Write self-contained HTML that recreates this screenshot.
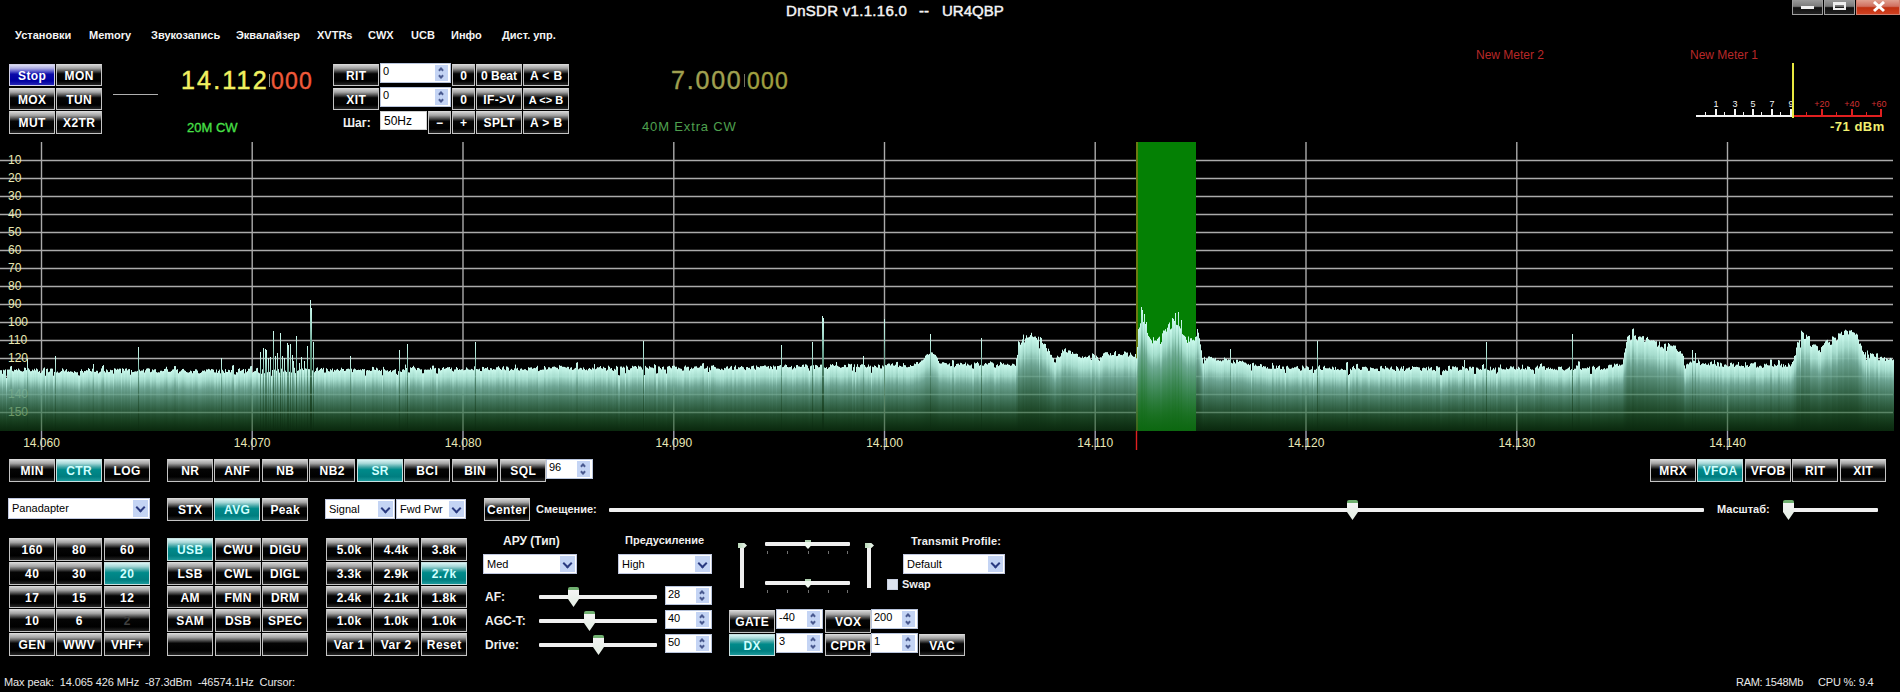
<!DOCTYPE html><html><head><meta charset="utf-8"><style>
*{margin:0;padding:0}
html,body{width:1900px;height:692px;overflow:hidden;background:#000}
body{position:relative;font-family:"Liberation Sans",sans-serif}
.t{position:absolute;white-space:nowrap;line-height:1.2;font-family:"Liberation Sans",sans-serif}
.b{position:absolute;box-sizing:border-box;border:1px solid #c4c4c4;border-top-color:#d8d8d8;
 background:linear-gradient(#d0d0d0 0%,#a4a4a4 16%,#4a4a4a 32%,#050505 44%,#000 80%,#262626 100%);
 color:#fff;font-weight:bold;text-align:center;white-space:nowrap;overflow:hidden;font-family:"Liberation Sans",sans-serif}
.b.tl{background:linear-gradient(#d8f4f4 0%,#a8d8d8 16%,#40a4a4 34%,#008a8a 46%,#007e80 80%,#1c9a9c 100%);color:#d0ffff;border-color:#c8e0e0}
.b.bl{background:linear-gradient(#dcdcf4 0%,#b0b0e4 16%,#5050c8 34%,#0a0aa8 46%,#0000a0 80%,#2424b8 100%);color:#fff;border-color:#d0d0e8}
.sp{position:absolute;box-sizing:border-box;background:#fff;border:1px solid #b8c4dc}
.sp span{position:absolute;left:2px;top:1px;font-size:11px;color:#000;line-height:13px}
.sp i{position:absolute;right:2px;top:1px;width:13px;background:#c4d4f4;box-sizing:border-box}
.sp b{position:absolute;left:4px;width:4px;height:4px;border-left:2px solid #4a5a90;border-top:2px solid #4a5a90;box-sizing:border-box}
.sp b.up{top:3px;transform:rotate(45deg)}
.sp b.dn{bottom:3px;transform:rotate(225deg)}
.inp{position:absolute;box-sizing:border-box;background:#fff;border:1px solid #d0d0d0;font-size:12px;color:#000;padding-left:3px;line-height:19px}
.dd{position:absolute;box-sizing:border-box;background:#fff;border:1px solid #c0c8e0;font-size:11px;color:#000}
.dd span{position:absolute;left:3px;top:0}
.dd i{position:absolute;right:1px;top:1px;bottom:1px;width:15px;background:#c4d4f4}
.dd i:after{content:"";position:absolute;left:4px;top:4px;width:5px;height:5px;border-right:2px solid #2a3a80;border-bottom:2px solid #2a3a80;transform:rotate(45deg)}
.trk{position:absolute;height:4px;background:#f0f0f0;border-radius:1px}
.vtrk{position:absolute;width:4px;background:#f0f0f0}
.thumb{position:absolute;width:11px;height:20px;background:linear-gradient(#70b070 0,#70b070 3px,#f4f4f4 3px,#e8f0e8 70%);clip-path:polygon(0 0,100% 0,100% 60%,50% 100%,0 60%);border-radius:2px 2px 0 0}
.vth{position:absolute;width:9px;height:5px;background:linear-gradient(90deg,#b8d8b8,#f0f8f0);clip-path:polygon(0 0,70% 0,100% 50%,70% 100%,0 100%)}
.sth{position:absolute;width:6px;height:9px;background:linear-gradient(#b0d0b0 0,#b0d0b0 2px,#f0f8f0 2px);clip-path:polygon(0 0,100% 0,100% 65%,50% 100%,0 65%)}
.wb{position:absolute;top:0;height:15px;box-sizing:border-box;border:1px solid #a0a0a0;border-top:none;background:linear-gradient(#9a9a9a 0%,#7a7a7a 45%,#101010 55%,#202020 100%)}
.wb.wc{background:linear-gradient(#e0a090 0%,#d07060 45%,#c03010 55%,#d04020 100%);border-color:#d08070}
.wmin{position:absolute;left:8px;top:6px;width:13px;height:3px;background:#f0f0f0}
.wmax{position:absolute;left:8px;top:2px;width:13px;height:8px;box-sizing:border-box;border:2px solid #f0f0f0;border-top-width:3px}
.wx{position:absolute;left:15px;top:-3px;font:bold 15px "Liberation Sans";color:#fff;font-style:normal}
</style></head><body><svg width="1900" height="692" style="position:absolute;left:0;top:0"><defs><linearGradient id="sg" x1="0" y1="0" x2="0" y2="1"><stop offset="0" stop-color="#ccfaee" stop-opacity="1"/><stop offset="0.16" stop-color="#a8e0d1" stop-opacity="0.98"/><stop offset="0.30" stop-color="#74ae9c" stop-opacity="0.95"/><stop offset="0.56" stop-color="#4b8a69" stop-opacity="0.8"/><stop offset="0.83" stop-color="#276734" stop-opacity="0.62"/><stop offset="1" stop-color="#14501c" stop-opacity="0.5"/></linearGradient></defs><path d="M0,160.5H1893M0,178.5H1893M0,196.5H1893M0,214.5H1893M0,232.5H1893M0,250.5H1893M0,268.5H1893M0,286.5H1893M0,304.5H1893M0,322.5H1893M0,340.5H1893M0,358.5H1893M0,376.5H1893M0,394.5H1893M0,412.5H1893M41.5,142V431M252.2,142V431M463.0,142V431M673.8,142V431M884.5,142V431M1095.2,142V431M1306.0,142V431M1516.8,142V431M1727.5,142V431" stroke="#c8c8c8" stroke-opacity="0.85" stroke-width="1.4" fill="none"/><text x="8" y="398.0" font-family="Liberation Sans" font-size="12" fill="#e8e8b0">140</text><text x="8" y="416.0" font-family="Liberation Sans" font-size="12" fill="#e8e8b0">150</text><rect x="1136" y="142" width="60" height="289" fill="#048004"/><rect x="1136" y="142" width="2" height="289" fill="#6a7a10"/><g fill="url(#sg)"><rect x="0" y="370.2" width="1" height="60.8"/><rect x="1" y="370.2" width="1" height="60.8"/><rect x="2" y="373.8" width="1" height="57.2"/><rect x="3" y="369.8" width="1" height="61.2"/><rect x="4" y="370.3" width="1" height="60.7"/><rect x="5" y="369.4" width="1" height="61.6"/><rect x="6" y="377.9" width="1" height="53.1"/><rect x="7" y="369.6" width="1" height="61.4"/><rect x="8" y="369.6" width="1" height="61.4"/><rect x="9" y="369.5" width="1" height="61.5"/><rect x="10" y="366.5" width="1" height="64.5"/><rect x="11" y="366.0" width="1" height="65.0"/><rect x="12" y="370.8" width="1" height="60.2"/><rect x="13" y="371.4" width="1" height="59.6"/><rect x="14" y="369.7" width="1" height="61.3"/><rect x="15" y="370.0" width="1" height="61.0"/><rect x="16" y="369.2" width="1" height="61.8"/><rect x="17" y="370.3" width="1" height="60.7"/><rect x="18" y="368.5" width="1" height="62.5"/><rect x="19" y="369.7" width="1" height="61.3"/><rect x="20" y="370.8" width="1" height="60.2"/><rect x="21" y="371.2" width="1" height="59.8"/><rect x="22" y="371.6" width="1" height="59.4"/><rect x="23" y="371.1" width="1" height="59.9"/><rect x="24" y="367.6" width="1" height="63.4"/><rect x="25" y="367.9" width="1" height="63.1"/><rect x="26" y="370.1" width="1" height="60.9"/><rect x="27" y="359.0" width="1" height="72.0"/><rect x="28" y="368.3" width="1" height="62.7"/><rect x="29" y="369.6" width="1" height="61.4"/><rect x="30" y="371.2" width="1" height="59.8"/><rect x="31" y="371.1" width="1" height="59.9"/><rect x="32" y="369.6" width="1" height="61.4"/><rect x="33" y="370.5" width="1" height="60.5"/><rect x="34" y="368.8" width="1" height="62.2"/><rect x="35" y="370.3" width="1" height="60.7"/><rect x="36" y="368.4" width="1" height="62.6"/><rect x="37" y="369.3" width="1" height="61.7"/><rect x="38" y="371.8" width="1" height="59.2"/><rect x="39" y="370.9" width="1" height="60.1"/><rect x="40" y="373.1" width="1" height="57.9"/><rect x="41" y="372.3" width="1" height="58.7"/><rect x="42" y="370.5" width="1" height="60.5"/><rect x="43" y="368.4" width="1" height="62.6"/><rect x="44" y="367.5" width="1" height="63.5"/><rect x="45" y="375.9" width="1" height="55.1"/><rect x="46" y="369.0" width="1" height="62.0"/><rect x="47" y="368.6" width="1" height="62.4"/><rect x="48" y="372.2" width="1" height="58.8"/><rect x="49" y="371.6" width="1" height="59.4"/><rect x="50" y="368.7" width="1" height="62.3"/><rect x="51" y="368.5" width="1" height="62.5"/><rect x="52" y="368.7" width="1" height="62.3"/><rect x="53" y="375.8" width="1" height="55.2"/><rect x="54" y="371.9" width="1" height="59.1"/><rect x="55" y="356.0" width="1" height="75.0"/><rect x="56" y="372.4" width="1" height="58.6"/><rect x="57" y="371.5" width="1" height="59.5"/><rect x="58" y="372.7" width="1" height="58.3"/><rect x="59" y="372.6" width="1" height="58.4"/><rect x="60" y="371.8" width="1" height="59.2"/><rect x="61" y="371.0" width="1" height="60.0"/><rect x="62" y="368.3" width="1" height="62.7"/><rect x="63" y="369.5" width="1" height="61.5"/><rect x="64" y="371.3" width="1" height="59.7"/><rect x="65" y="370.3" width="1" height="60.7"/><rect x="66" y="369.1" width="1" height="61.9"/><rect x="67" y="371.8" width="1" height="59.2"/><rect x="68" y="371.2" width="1" height="59.8"/><rect x="69" y="371.9" width="1" height="59.1"/><rect x="70" y="371.3" width="1" height="59.7"/><rect x="71" y="371.6" width="1" height="59.4"/><rect x="72" y="371.9" width="1" height="59.1"/><rect x="73" y="372.8" width="1" height="58.2"/><rect x="74" y="371.1" width="1" height="59.9"/><rect x="75" y="371.9" width="1" height="59.1"/><rect x="76" y="372.4" width="1" height="58.6"/><rect x="77" y="372.2" width="1" height="58.8"/><rect x="78" y="375.3" width="1" height="55.7"/><rect x="79" y="375.7" width="1" height="55.3"/><rect x="80" y="371.0" width="1" height="60.0"/><rect x="81" y="369.3" width="1" height="61.7"/><rect x="82" y="371.0" width="1" height="60.0"/><rect x="83" y="372.5" width="1" height="58.5"/><rect x="84" y="371.0" width="1" height="60.0"/><rect x="85" y="371.1" width="1" height="59.9"/><rect x="86" y="370.1" width="1" height="60.9"/><rect x="87" y="370.4" width="1" height="60.6"/><rect x="88" y="368.1" width="1" height="62.9"/><rect x="89" y="369.0" width="1" height="62.0"/><rect x="90" y="371.0" width="1" height="60.0"/><rect x="91" y="371.5" width="1" height="59.5"/><rect x="92" y="368.7" width="1" height="62.3"/><rect x="93" y="364.0" width="1" height="67.0"/><rect x="94" y="371.8" width="1" height="59.2"/><rect x="95" y="371.9" width="1" height="59.1"/><rect x="96" y="370.7" width="1" height="60.3"/><rect x="97" y="370.8" width="1" height="60.2"/><rect x="98" y="373.3" width="1" height="57.7"/><rect x="99" y="372.3" width="1" height="58.7"/><rect x="100" y="371.6" width="1" height="59.4"/><rect x="101" y="368.4" width="1" height="62.6"/><rect x="102" y="366.1" width="1" height="64.9"/><rect x="103" y="365.1" width="1" height="65.9"/><rect x="104" y="371.1" width="1" height="59.9"/><rect x="105" y="372.4" width="1" height="58.6"/><rect x="106" y="369.4" width="1" height="61.6"/><rect x="107" y="370.3" width="1" height="60.7"/><rect x="108" y="372.1" width="1" height="58.9"/><rect x="109" y="371.9" width="1" height="59.1"/><rect x="110" y="369.8" width="1" height="61.2"/><rect x="111" y="370.2" width="1" height="60.8"/><rect x="112" y="370.1" width="1" height="60.9"/><rect x="113" y="373.6" width="1" height="57.4"/><rect x="114" y="368.3" width="1" height="62.7"/><rect x="115" y="368.7" width="1" height="62.3"/><rect x="116" y="369.8" width="1" height="61.2"/><rect x="117" y="368.8" width="1" height="62.2"/><rect x="118" y="369.4" width="1" height="61.6"/><rect x="119" y="368.6" width="1" height="62.4"/><rect x="120" y="368.7" width="1" height="62.3"/><rect x="121" y="373.1" width="1" height="57.9"/><rect x="122" y="368.3" width="1" height="62.7"/><rect x="123" y="368.9" width="1" height="62.1"/><rect x="124" y="370.7" width="1" height="60.3"/><rect x="125" y="368.7" width="1" height="62.3"/><rect x="126" y="368.4" width="1" height="62.6"/><rect x="127" y="370.4" width="1" height="60.6"/><rect x="128" y="369.3" width="1" height="61.7"/><rect x="129" y="369.1" width="1" height="61.9"/><rect x="130" y="374.7" width="1" height="56.3"/><rect x="131" y="370.0" width="1" height="61.0"/><rect x="132" y="372.1" width="1" height="58.9"/><rect x="133" y="372.0" width="1" height="59.0"/><rect x="134" y="371.6" width="1" height="59.4"/><rect x="135" y="371.3" width="1" height="59.7"/><rect x="136" y="371.5" width="1" height="59.5"/><rect x="137" y="370.9" width="1" height="60.1"/><rect x="138" y="347.0" width="1" height="84.0"/><rect x="139" y="369.6" width="1" height="61.4"/><rect x="140" y="371.1" width="1" height="59.9"/><rect x="141" y="370.5" width="1" height="60.5"/><rect x="142" y="370.5" width="1" height="60.5"/><rect x="143" y="369.3" width="1" height="61.7"/><rect x="144" y="372.5" width="1" height="58.5"/><rect x="145" y="370.3" width="1" height="60.7"/><rect x="146" y="368.7" width="1" height="62.3"/><rect x="147" y="368.3" width="1" height="62.7"/><rect x="148" y="368.3" width="1" height="62.7"/><rect x="149" y="368.7" width="1" height="62.3"/><rect x="150" y="372.2" width="1" height="58.8"/><rect x="151" y="371.7" width="1" height="59.3"/><rect x="152" y="369.4" width="1" height="61.6"/><rect x="153" y="370.2" width="1" height="60.8"/><rect x="154" y="369.4" width="1" height="61.6"/><rect x="155" y="369.2" width="1" height="61.8"/><rect x="156" y="372.1" width="1" height="58.9"/><rect x="157" y="372.6" width="1" height="58.4"/><rect x="158" y="372.2" width="1" height="58.8"/><rect x="159" y="372.4" width="1" height="58.6"/><rect x="160" y="370.8" width="1" height="60.2"/><rect x="161" y="370.7" width="1" height="60.3"/><rect x="162" y="371.2" width="1" height="59.8"/><rect x="163" y="371.0" width="1" height="60.0"/><rect x="164" y="369.0" width="1" height="62.0"/><rect x="165" y="368.7" width="1" height="62.3"/><rect x="166" y="366.8" width="1" height="64.2"/><rect x="167" y="369.3" width="1" height="61.7"/><rect x="168" y="371.8" width="1" height="59.2"/><rect x="169" y="371.8" width="1" height="59.2"/><rect x="170" y="371.7" width="1" height="59.3"/><rect x="171" y="370.9" width="1" height="60.1"/><rect x="172" y="369.6" width="1" height="61.4"/><rect x="173" y="369.3" width="1" height="61.7"/><rect x="174" y="366.1" width="1" height="64.9"/><rect x="175" y="366.1" width="1" height="64.9"/><rect x="176" y="369.8" width="1" height="61.2"/><rect x="177" y="369.2" width="1" height="61.8"/><rect x="178" y="373.2" width="1" height="57.8"/><rect x="179" y="371.7" width="1" height="59.3"/><rect x="180" y="371.3" width="1" height="59.7"/><rect x="181" y="370.2" width="1" height="60.8"/><rect x="182" y="369.0" width="1" height="62.0"/><rect x="183" y="368.9" width="1" height="62.1"/><rect x="184" y="370.3" width="1" height="60.7"/><rect x="185" y="370.9" width="1" height="60.1"/><rect x="186" y="372.0" width="1" height="59.0"/><rect x="187" y="372.4" width="1" height="58.6"/><rect x="188" y="372.6" width="1" height="58.4"/><rect x="189" y="372.1" width="1" height="58.9"/><rect x="190" y="370.6" width="1" height="60.4"/><rect x="191" y="371.2" width="1" height="59.8"/><rect x="192" y="373.2" width="1" height="57.8"/><rect x="193" y="371.0" width="1" height="60.0"/><rect x="194" y="371.0" width="1" height="60.0"/><rect x="195" y="369.3" width="1" height="61.7"/><rect x="196" y="369.4" width="1" height="61.6"/><rect x="197" y="370.6" width="1" height="60.4"/><rect x="198" y="373.2" width="1" height="57.8"/><rect x="199" y="373.4" width="1" height="57.6"/><rect x="200" y="373.0" width="1" height="58.0"/><rect x="201" y="372.2" width="1" height="58.8"/><rect x="202" y="370.7" width="1" height="60.3"/><rect x="203" y="370.8" width="1" height="60.2"/><rect x="204" y="370.3" width="1" height="60.7"/><rect x="205" y="371.4" width="1" height="59.6"/><rect x="206" y="369.4" width="1" height="61.6"/><rect x="207" y="369.6" width="1" height="61.4"/><rect x="208" y="368.9" width="1" height="62.1"/><rect x="209" y="369.3" width="1" height="61.7"/><rect x="210" y="370.3" width="1" height="60.7"/><rect x="211" y="369.0" width="1" height="62.0"/><rect x="212" y="369.2" width="1" height="61.8"/><rect x="213" y="369.7" width="1" height="61.3"/><rect x="214" y="372.3" width="1" height="58.7"/><rect x="215" y="372.5" width="1" height="58.5"/><rect x="216" y="369.5" width="1" height="61.5"/><rect x="217" y="372.8" width="1" height="58.2"/><rect x="218" y="370.9" width="1" height="60.1"/><rect x="219" y="369.6" width="1" height="61.4"/><rect x="220" y="373.3" width="1" height="57.7"/><rect x="221" y="358.0" width="1" height="73.0"/><rect x="222" y="369.8" width="1" height="61.2"/><rect x="223" y="371.3" width="1" height="59.7"/><rect x="224" y="372.9" width="1" height="58.1"/><rect x="225" y="369.1" width="1" height="61.9"/><rect x="226" y="371.9" width="1" height="59.1"/><rect x="227" y="372.0" width="1" height="59.0"/><rect x="228" y="369.8" width="1" height="61.2"/><rect x="229" y="370.1" width="1" height="60.9"/><rect x="230" y="372.3" width="1" height="58.7"/><rect x="231" y="370.0" width="1" height="61.0"/><rect x="232" y="365.6" width="1" height="65.4"/><rect x="233" y="365.1" width="1" height="65.9"/><rect x="234" y="374.3" width="1" height="56.7"/><rect x="235" y="374.6" width="1" height="56.4"/><rect x="236" y="372.0" width="1" height="59.0"/><rect x="237" y="372.4" width="1" height="58.6"/><rect x="238" y="369.0" width="1" height="62.0"/><rect x="239" y="368.3" width="1" height="62.7"/><rect x="240" y="371.0" width="1" height="60.0"/><rect x="241" y="370.4" width="1" height="60.6"/><rect x="242" y="369.8" width="1" height="61.2"/><rect x="243" y="369.0" width="1" height="62.0"/><rect x="244" y="373.3" width="1" height="57.7"/><rect x="245" y="369.2" width="1" height="61.8"/><rect x="246" y="372.2" width="1" height="58.8"/><rect x="247" y="371.1" width="1" height="59.9"/><rect x="248" y="368.8" width="1" height="62.2"/><rect x="249" y="368.7" width="1" height="62.3"/><rect x="250" y="366.3" width="1" height="64.7"/><rect x="251" y="366.0" width="1" height="65.0"/><rect x="252" y="372.6" width="1" height="58.4"/><rect x="253" y="371.9" width="1" height="59.1"/><rect x="254" y="371.2" width="1" height="59.8"/><rect x="255" y="370.9" width="1" height="60.1"/><rect x="256" y="368.3" width="1" height="62.7"/><rect x="257" y="367.9" width="1" height="63.1"/><rect x="258" y="372.5" width="1" height="58.5"/><rect x="259" y="373.2" width="1" height="57.8"/><rect x="260" y="352.0" width="1" height="79.0"/><rect x="261" y="373.8" width="1" height="57.2"/><rect x="262" y="369.3" width="1" height="61.7"/><rect x="263" y="348.0" width="1" height="83.0"/><rect x="264" y="373.2" width="1" height="57.8"/><rect x="265" y="349.0" width="1" height="82.0"/><rect x="266" y="350.0" width="1" height="81.0"/><rect x="267" y="372.2" width="1" height="58.8"/><rect x="268" y="358.0" width="1" height="73.0"/><rect x="269" y="371.9" width="1" height="59.1"/><rect x="270" y="357.0" width="1" height="74.0"/><rect x="271" y="376.2" width="1" height="54.8"/><rect x="272" y="370.0" width="1" height="61.0"/><rect x="273" y="331.0" width="1" height="100.0"/><rect x="274" y="369.6" width="1" height="61.4"/><rect x="275" y="356.0" width="1" height="75.0"/><rect x="276" y="370.7" width="1" height="60.3"/><rect x="277" y="353.0" width="1" height="78.0"/><rect x="278" y="369.1" width="1" height="61.9"/><rect x="279" y="372.6" width="1" height="58.4"/><rect x="280" y="333.0" width="1" height="98.0"/><rect x="281" y="368.7" width="1" height="62.3"/><rect x="282" y="356.0" width="1" height="75.0"/><rect x="283" y="371.6" width="1" height="59.4"/><rect x="284" y="358.0" width="1" height="73.0"/><rect x="285" y="370.6" width="1" height="60.4"/><rect x="286" y="372.0" width="1" height="59.0"/><rect x="287" y="343.0" width="1" height="88.0"/><rect x="288" y="345.0" width="1" height="86.0"/><rect x="289" y="371.8" width="1" height="59.2"/><rect x="290" y="344.0" width="1" height="87.0"/><rect x="291" y="372.5" width="1" height="58.5"/><rect x="292" y="355.0" width="1" height="76.0"/><rect x="293" y="361.0" width="1" height="70.0"/><rect x="294" y="367.8" width="1" height="63.2"/><rect x="295" y="373.1" width="1" height="57.9"/><rect x="296" y="336.0" width="1" height="95.0"/><rect x="297" y="370.9" width="1" height="60.1"/><rect x="298" y="370.3" width="1" height="60.7"/><rect x="299" y="363.0" width="1" height="68.0"/><rect x="300" y="369.2" width="1" height="61.8"/><rect x="301" y="357.0" width="1" height="74.0"/><rect x="302" y="368.5" width="1" height="62.5"/><rect x="303" y="370.0" width="1" height="61.0"/><rect x="304" y="361.0" width="1" height="70.0"/><rect x="305" y="368.4" width="1" height="62.6"/><rect x="306" y="368.8" width="1" height="62.2"/><rect x="307" y="346.0" width="1" height="85.0"/><rect x="308" y="369.1" width="1" height="61.9"/><rect x="309" y="369.2" width="1" height="61.8"/><rect x="310" y="300.0" width="1" height="131.0"/><rect x="311" y="308.0" width="1" height="123.0"/><rect x="312" y="370.4" width="1" height="60.6"/><rect x="313" y="342.0" width="1" height="89.0"/><rect x="314" y="372.2" width="1" height="58.8"/><rect x="315" y="371.0" width="1" height="60.0"/><rect x="316" y="368.3" width="1" height="62.7"/><rect x="317" y="367.4" width="1" height="63.6"/><rect x="318" y="370.7" width="1" height="60.3"/><rect x="319" y="369.9" width="1" height="61.1"/><rect x="320" y="368.9" width="1" height="62.1"/><rect x="321" y="368.0" width="1" height="63.0"/><rect x="322" y="369.3" width="1" height="61.7"/><rect x="323" y="367.8" width="1" height="63.2"/><rect x="324" y="372.6" width="1" height="58.4"/><rect x="325" y="372.5" width="1" height="58.5"/><rect x="326" y="368.2" width="1" height="62.8"/><rect x="327" y="369.2" width="1" height="61.8"/><rect x="328" y="371.1" width="1" height="59.9"/><rect x="329" y="371.5" width="1" height="59.5"/><rect x="330" y="369.2" width="1" height="61.8"/><rect x="331" y="370.2" width="1" height="60.8"/><rect x="332" y="368.5" width="1" height="62.5"/><rect x="333" y="371.7" width="1" height="59.3"/><rect x="334" y="369.9" width="1" height="61.1"/><rect x="335" y="370.4" width="1" height="60.6"/><rect x="336" y="369.6" width="1" height="61.4"/><rect x="337" y="368.9" width="1" height="62.1"/><rect x="338" y="370.1" width="1" height="60.9"/><rect x="339" y="370.9" width="1" height="60.1"/><rect x="340" y="369.8" width="1" height="61.2"/><rect x="341" y="367.7" width="1" height="63.3"/><rect x="342" y="369.0" width="1" height="62.0"/><rect x="343" y="369.0" width="1" height="62.0"/><rect x="344" y="371.0" width="1" height="60.0"/><rect x="345" y="370.7" width="1" height="60.3"/><rect x="346" y="369.1" width="1" height="61.9"/><rect x="347" y="368.8" width="1" height="62.2"/><rect x="348" y="368.6" width="1" height="62.4"/><rect x="349" y="369.2" width="1" height="61.8"/><rect x="350" y="356.0" width="1" height="75.0"/><rect x="351" y="368.7" width="1" height="62.3"/><rect x="352" y="372.1" width="1" height="58.9"/><rect x="353" y="369.4" width="1" height="61.6"/><rect x="354" y="368.5" width="1" height="62.5"/><rect x="355" y="369.2" width="1" height="61.8"/><rect x="356" y="370.1" width="1" height="60.9"/><rect x="357" y="370.0" width="1" height="61.0"/><rect x="358" y="369.7" width="1" height="61.3"/><rect x="359" y="370.0" width="1" height="61.0"/><rect x="360" y="369.5" width="1" height="61.5"/><rect x="361" y="370.3" width="1" height="60.7"/><rect x="362" y="369.0" width="1" height="62.0"/><rect x="363" y="369.4" width="1" height="61.6"/><rect x="364" y="369.1" width="1" height="61.9"/><rect x="365" y="375.7" width="1" height="55.3"/><rect x="366" y="370.5" width="1" height="60.5"/><rect x="367" y="370.0" width="1" height="61.0"/><rect x="368" y="370.4" width="1" height="60.6"/><rect x="369" y="370.2" width="1" height="60.8"/><rect x="370" y="371.0" width="1" height="60.0"/><rect x="371" y="370.7" width="1" height="60.3"/><rect x="372" y="366.9" width="1" height="64.1"/><rect x="373" y="367.1" width="1" height="63.9"/><rect x="374" y="369.6" width="1" height="61.4"/><rect x="375" y="370.0" width="1" height="61.0"/><rect x="376" y="367.7" width="1" height="63.3"/><rect x="377" y="368.5" width="1" height="62.5"/><rect x="378" y="370.5" width="1" height="60.5"/><rect x="379" y="370.0" width="1" height="61.0"/><rect x="380" y="371.0" width="1" height="60.0"/><rect x="381" y="369.8" width="1" height="61.2"/><rect x="382" y="375.3" width="1" height="55.7"/><rect x="383" y="366.9" width="1" height="64.1"/><rect x="384" y="369.2" width="1" height="61.8"/><rect x="385" y="370.3" width="1" height="60.7"/><rect x="386" y="370.6" width="1" height="60.4"/><rect x="387" y="370.2" width="1" height="60.8"/><rect x="388" y="371.6" width="1" height="59.4"/><rect x="389" y="371.0" width="1" height="60.0"/><rect x="390" y="370.1" width="1" height="60.9"/><rect x="391" y="372.1" width="1" height="58.9"/><rect x="392" y="370.7" width="1" height="60.3"/><rect x="393" y="370.2" width="1" height="60.8"/><rect x="394" y="369.8" width="1" height="61.2"/><rect x="395" y="369.1" width="1" height="61.9"/><rect x="396" y="373.8" width="1" height="57.2"/><rect x="397" y="374.9" width="1" height="56.1"/><rect x="398" y="371.1" width="1" height="59.9"/><rect x="399" y="350.0" width="1" height="81.0"/><rect x="400" y="371.5" width="1" height="59.5"/><rect x="401" y="372.0" width="1" height="59.0"/><rect x="402" y="369.6" width="1" height="61.4"/><rect x="403" y="369.2" width="1" height="61.8"/><rect x="404" y="370.1" width="1" height="60.9"/><rect x="405" y="364.6" width="1" height="66.4"/><rect x="406" y="368.0" width="1" height="63.0"/><rect x="407" y="344.0" width="1" height="87.0"/><rect x="408" y="372.3" width="1" height="58.7"/><rect x="409" y="372.5" width="1" height="58.5"/><rect x="410" y="367.3" width="1" height="63.7"/><rect x="411" y="368.0" width="1" height="63.0"/><rect x="412" y="367.1" width="1" height="63.9"/><rect x="413" y="365.8" width="1" height="65.2"/><rect x="414" y="367.3" width="1" height="63.7"/><rect x="415" y="368.6" width="1" height="62.4"/><rect x="416" y="370.1" width="1" height="60.9"/><rect x="417" y="368.0" width="1" height="63.0"/><rect x="418" y="367.9" width="1" height="63.1"/><rect x="419" y="368.6" width="1" height="62.4"/><rect x="420" y="369.5" width="1" height="61.5"/><rect x="421" y="369.3" width="1" height="61.7"/><rect x="422" y="373.3" width="1" height="57.7"/><rect x="423" y="373.2" width="1" height="57.8"/><rect x="424" y="369.7" width="1" height="61.3"/><rect x="425" y="369.5" width="1" height="61.5"/><rect x="426" y="369.8" width="1" height="61.2"/><rect x="427" y="369.6" width="1" height="61.4"/><rect x="428" y="369.6" width="1" height="61.4"/><rect x="429" y="369.7" width="1" height="61.3"/><rect x="430" y="367.8" width="1" height="63.2"/><rect x="431" y="369.4" width="1" height="61.6"/><rect x="432" y="365.7" width="1" height="65.3"/><rect x="433" y="365.6" width="1" height="65.4"/><rect x="434" y="368.4" width="1" height="62.6"/><rect x="435" y="367.9" width="1" height="63.1"/><rect x="436" y="373.3" width="1" height="57.7"/><rect x="437" y="373.6" width="1" height="57.4"/><rect x="438" y="368.2" width="1" height="62.8"/><rect x="439" y="368.6" width="1" height="62.4"/><rect x="440" y="370.4" width="1" height="60.6"/><rect x="441" y="369.9" width="1" height="61.1"/><rect x="442" y="367.9" width="1" height="63.1"/><rect x="443" y="367.1" width="1" height="63.9"/><rect x="444" y="368.9" width="1" height="62.1"/><rect x="445" y="368.5" width="1" height="62.5"/><rect x="446" y="368.0" width="1" height="63.0"/><rect x="447" y="367.2" width="1" height="63.8"/><rect x="448" y="367.3" width="1" height="63.7"/><rect x="449" y="367.0" width="1" height="64.0"/><rect x="450" y="369.0" width="1" height="62.0"/><rect x="451" y="367.6" width="1" height="63.4"/><rect x="452" y="370.8" width="1" height="60.2"/><rect x="453" y="371.5" width="1" height="59.5"/><rect x="454" y="369.5" width="1" height="61.5"/><rect x="455" y="369.4" width="1" height="61.6"/><rect x="456" y="367.0" width="1" height="64.0"/><rect x="457" y="368.2" width="1" height="62.8"/><rect x="458" y="370.0" width="1" height="61.0"/><rect x="459" y="369.2" width="1" height="61.8"/><rect x="460" y="369.8" width="1" height="61.2"/><rect x="461" y="369.3" width="1" height="61.7"/><rect x="462" y="369.1" width="1" height="61.9"/><rect x="463" y="370.3" width="1" height="60.7"/><rect x="464" y="370.1" width="1" height="60.9"/><rect x="465" y="369.7" width="1" height="61.3"/><rect x="466" y="367.4" width="1" height="63.6"/><rect x="467" y="368.5" width="1" height="62.5"/><rect x="468" y="369.4" width="1" height="61.6"/><rect x="469" y="369.7" width="1" height="61.3"/><rect x="470" y="369.7" width="1" height="61.3"/><rect x="471" y="368.9" width="1" height="62.1"/><rect x="472" y="369.3" width="1" height="61.7"/><rect x="473" y="370.2" width="1" height="60.8"/><rect x="474" y="366.3" width="1" height="64.7"/><rect x="475" y="342.0" width="1" height="89.0"/><rect x="476" y="369.0" width="1" height="62.0"/><rect x="477" y="369.2" width="1" height="61.8"/><rect x="478" y="369.4" width="1" height="61.6"/><rect x="479" y="368.7" width="1" height="62.3"/><rect x="480" y="371.0" width="1" height="60.0"/><rect x="481" y="371.1" width="1" height="59.9"/><rect x="482" y="366.9" width="1" height="64.1"/><rect x="483" y="367.0" width="1" height="64.0"/><rect x="484" y="368.7" width="1" height="62.3"/><rect x="485" y="368.0" width="1" height="63.0"/><rect x="486" y="368.2" width="1" height="62.8"/><rect x="487" y="367.1" width="1" height="63.9"/><rect x="488" y="369.6" width="1" height="61.4"/><rect x="489" y="370.1" width="1" height="60.9"/><rect x="490" y="368.1" width="1" height="62.9"/><rect x="491" y="368.3" width="1" height="62.7"/><rect x="492" y="369.8" width="1" height="61.2"/><rect x="493" y="369.0" width="1" height="62.0"/><rect x="494" y="369.4" width="1" height="61.6"/><rect x="495" y="369.5" width="1" height="61.5"/><rect x="496" y="367.3" width="1" height="63.7"/><rect x="497" y="367.2" width="1" height="63.8"/><rect x="498" y="366.2" width="1" height="64.8"/><rect x="499" y="367.7" width="1" height="63.3"/><rect x="500" y="369.0" width="1" height="62.0"/><rect x="501" y="369.8" width="1" height="61.2"/><rect x="502" y="367.4" width="1" height="63.6"/><rect x="503" y="366.2" width="1" height="64.8"/><rect x="504" y="369.3" width="1" height="61.7"/><rect x="505" y="370.2" width="1" height="60.8"/><rect x="506" y="366.5" width="1" height="64.5"/><rect x="507" y="366.7" width="1" height="64.3"/><rect x="508" y="367.6" width="1" height="63.4"/><rect x="509" y="370.8" width="1" height="60.2"/><rect x="510" y="369.8" width="1" height="61.2"/><rect x="511" y="368.9" width="1" height="62.1"/><rect x="512" y="369.8" width="1" height="61.2"/><rect x="513" y="370.1" width="1" height="60.9"/><rect x="514" y="368.4" width="1" height="62.6"/><rect x="515" y="364.6" width="1" height="66.4"/><rect x="516" y="368.6" width="1" height="62.4"/><rect x="517" y="367.8" width="1" height="63.2"/><rect x="518" y="370.2" width="1" height="60.8"/><rect x="519" y="370.6" width="1" height="60.4"/><rect x="520" y="368.8" width="1" height="62.2"/><rect x="521" y="368.4" width="1" height="62.6"/><rect x="522" y="369.7" width="1" height="61.3"/><rect x="523" y="369.8" width="1" height="61.2"/><rect x="524" y="369.2" width="1" height="61.8"/><rect x="525" y="369.2" width="1" height="61.8"/><rect x="526" y="370.1" width="1" height="60.9"/><rect x="527" y="370.5" width="1" height="60.5"/><rect x="528" y="367.2" width="1" height="63.8"/><rect x="529" y="367.8" width="1" height="63.2"/><rect x="530" y="367.5" width="1" height="63.5"/><rect x="531" y="367.3" width="1" height="63.7"/><rect x="532" y="368.8" width="1" height="62.2"/><rect x="533" y="368.3" width="1" height="62.7"/><rect x="534" y="367.9" width="1" height="63.1"/><rect x="535" y="368.2" width="1" height="62.8"/><rect x="536" y="367.1" width="1" height="63.9"/><rect x="537" y="365.8" width="1" height="65.2"/><rect x="538" y="371.1" width="1" height="59.9"/><rect x="539" y="370.6" width="1" height="60.4"/><rect x="540" y="369.9" width="1" height="61.1"/><rect x="541" y="369.9" width="1" height="61.1"/><rect x="542" y="369.6" width="1" height="61.4"/><rect x="543" y="369.6" width="1" height="61.4"/><rect x="544" y="366.0" width="1" height="65.0"/><rect x="545" y="367.4" width="1" height="63.6"/><rect x="546" y="369.6" width="1" height="61.4"/><rect x="547" y="369.2" width="1" height="61.8"/><rect x="548" y="367.3" width="1" height="63.7"/><rect x="549" y="367.3" width="1" height="63.7"/><rect x="550" y="368.3" width="1" height="62.7"/><rect x="551" y="368.3" width="1" height="62.7"/><rect x="552" y="366.9" width="1" height="64.1"/><rect x="553" y="366.7" width="1" height="64.3"/><rect x="554" y="366.5" width="1" height="64.5"/><rect x="555" y="367.1" width="1" height="63.9"/><rect x="556" y="367.7" width="1" height="63.3"/><rect x="557" y="367.8" width="1" height="63.2"/><rect x="558" y="369.2" width="1" height="61.8"/><rect x="559" y="365.2" width="1" height="65.8"/><rect x="560" y="365.9" width="1" height="65.1"/><rect x="561" y="365.8" width="1" height="65.2"/><rect x="562" y="366.8" width="1" height="64.2"/><rect x="563" y="366.8" width="1" height="64.2"/><rect x="564" y="366.9" width="1" height="64.1"/><rect x="565" y="367.3" width="1" height="63.7"/><rect x="566" y="367.7" width="1" height="63.3"/><rect x="567" y="366.8" width="1" height="64.2"/><rect x="568" y="366.9" width="1" height="64.1"/><rect x="569" y="369.2" width="1" height="61.8"/><rect x="570" y="367.7" width="1" height="63.3"/><rect x="571" y="367.2" width="1" height="63.8"/><rect x="572" y="369.9" width="1" height="61.1"/><rect x="573" y="369.5" width="1" height="61.5"/><rect x="574" y="368.6" width="1" height="62.4"/><rect x="575" y="367.9" width="1" height="63.1"/><rect x="576" y="362.8" width="1" height="68.2"/><rect x="577" y="362.2" width="1" height="68.8"/><rect x="578" y="369.3" width="1" height="61.7"/><rect x="579" y="368.5" width="1" height="62.5"/><rect x="580" y="367.8" width="1" height="63.2"/><rect x="581" y="368.2" width="1" height="62.8"/><rect x="582" y="369.7" width="1" height="61.3"/><rect x="583" y="367.4" width="1" height="63.6"/><rect x="584" y="368.9" width="1" height="62.1"/><rect x="585" y="370.1" width="1" height="60.9"/><rect x="586" y="369.5" width="1" height="61.5"/><rect x="587" y="370.4" width="1" height="60.6"/><rect x="588" y="368.8" width="1" height="62.2"/><rect x="589" y="368.0" width="1" height="63.0"/><rect x="590" y="368.9" width="1" height="62.1"/><rect x="591" y="369.6" width="1" height="61.4"/><rect x="592" y="367.7" width="1" height="63.3"/><rect x="593" y="368.6" width="1" height="62.4"/><rect x="594" y="364.1" width="1" height="66.9"/><rect x="595" y="369.2" width="1" height="61.8"/><rect x="596" y="368.5" width="1" height="62.5"/><rect x="597" y="367.2" width="1" height="63.8"/><rect x="598" y="367.5" width="1" height="63.5"/><rect x="599" y="367.1" width="1" height="63.9"/><rect x="600" y="366.0" width="1" height="65.0"/><rect x="601" y="368.2" width="1" height="62.8"/><rect x="602" y="368.7" width="1" height="62.3"/><rect x="603" y="366.8" width="1" height="64.2"/><rect x="604" y="367.8" width="1" height="63.2"/><rect x="605" y="368.0" width="1" height="63.0"/><rect x="606" y="370.6" width="1" height="60.4"/><rect x="607" y="369.7" width="1" height="61.3"/><rect x="608" y="365.7" width="1" height="65.3"/><rect x="609" y="366.8" width="1" height="64.2"/><rect x="610" y="368.6" width="1" height="62.4"/><rect x="611" y="368.0" width="1" height="63.0"/><rect x="612" y="370.2" width="1" height="60.8"/><rect x="613" y="370.9" width="1" height="60.1"/><rect x="614" y="368.8" width="1" height="62.2"/><rect x="615" y="369.7" width="1" height="61.3"/><rect x="616" y="365.9" width="1" height="65.1"/><rect x="617" y="366.8" width="1" height="64.2"/><rect x="618" y="375.1" width="1" height="55.9"/><rect x="619" y="375.5" width="1" height="55.5"/><rect x="620" y="366.6" width="1" height="64.4"/><rect x="621" y="366.5" width="1" height="64.5"/><rect x="622" y="367.7" width="1" height="63.3"/><rect x="623" y="366.7" width="1" height="64.3"/><rect x="624" y="367.6" width="1" height="63.4"/><rect x="625" y="373.2" width="1" height="57.8"/><rect x="626" y="365.6" width="1" height="65.4"/><rect x="627" y="366.7" width="1" height="64.3"/><rect x="628" y="369.7" width="1" height="61.3"/><rect x="629" y="370.1" width="1" height="60.9"/><rect x="630" y="368.4" width="1" height="62.6"/><rect x="631" y="368.1" width="1" height="62.9"/><rect x="632" y="365.8" width="1" height="65.2"/><rect x="633" y="366.6" width="1" height="64.4"/><rect x="634" y="366.2" width="1" height="64.8"/><rect x="635" y="366.0" width="1" height="65.0"/><rect x="636" y="366.8" width="1" height="64.2"/><rect x="637" y="368.7" width="1" height="62.3"/><rect x="638" y="365.7" width="1" height="65.3"/><rect x="639" y="366.6" width="1" height="64.4"/><rect x="640" y="366.4" width="1" height="64.6"/><rect x="641" y="367.5" width="1" height="63.5"/><rect x="642" y="369.5" width="1" height="61.5"/><rect x="643" y="341.0" width="1" height="90.0"/><rect x="644" y="375.1" width="1" height="55.9"/><rect x="645" y="365.9" width="1" height="65.1"/><rect x="646" y="367.3" width="1" height="63.7"/><rect x="647" y="367.8" width="1" height="63.2"/><rect x="648" y="368.7" width="1" height="62.3"/><rect x="649" y="366.2" width="1" height="64.8"/><rect x="650" y="367.2" width="1" height="63.8"/><rect x="651" y="367.5" width="1" height="63.5"/><rect x="652" y="367.6" width="1" height="63.4"/><rect x="653" y="368.2" width="1" height="62.8"/><rect x="654" y="364.2" width="1" height="66.8"/><rect x="655" y="365.1" width="1" height="65.9"/><rect x="656" y="373.5" width="1" height="57.5"/><rect x="657" y="373.2" width="1" height="57.8"/><rect x="658" y="366.4" width="1" height="64.6"/><rect x="659" y="366.6" width="1" height="64.4"/><rect x="660" y="368.1" width="1" height="62.9"/><rect x="661" y="369.4" width="1" height="61.6"/><rect x="662" y="367.0" width="1" height="64.0"/><rect x="663" y="366.5" width="1" height="64.5"/><rect x="664" y="369.5" width="1" height="61.5"/><rect x="665" y="369.6" width="1" height="61.4"/><rect x="666" y="373.5" width="1" height="57.5"/><rect x="667" y="366.7" width="1" height="64.3"/><rect x="668" y="366.2" width="1" height="64.8"/><rect x="669" y="365.9" width="1" height="65.1"/><rect x="670" y="367.4" width="1" height="63.6"/><rect x="671" y="368.3" width="1" height="62.7"/><rect x="672" y="365.9" width="1" height="65.1"/><rect x="673" y="365.6" width="1" height="65.4"/><rect x="674" y="365.7" width="1" height="65.3"/><rect x="675" y="366.8" width="1" height="64.2"/><rect x="676" y="366.7" width="1" height="64.3"/><rect x="677" y="369.1" width="1" height="61.9"/><rect x="678" y="367.6" width="1" height="63.4"/><rect x="679" y="368.2" width="1" height="62.8"/><rect x="680" y="368.6" width="1" height="62.4"/><rect x="681" y="368.9" width="1" height="62.1"/><rect x="682" y="370.6" width="1" height="60.4"/><rect x="683" y="370.5" width="1" height="60.5"/><rect x="684" y="366.6" width="1" height="64.4"/><rect x="685" y="365.5" width="1" height="65.5"/><rect x="686" y="367.3" width="1" height="63.7"/><rect x="687" y="366.8" width="1" height="64.2"/><rect x="688" y="366.8" width="1" height="64.2"/><rect x="689" y="370.5" width="1" height="60.5"/><rect x="690" y="369.0" width="1" height="62.0"/><rect x="691" y="367.6" width="1" height="63.4"/><rect x="692" y="368.7" width="1" height="62.3"/><rect x="693" y="368.2" width="1" height="62.8"/><rect x="694" y="366.6" width="1" height="64.4"/><rect x="695" y="366.4" width="1" height="64.6"/><rect x="696" y="366.3" width="1" height="64.7"/><rect x="697" y="367.7" width="1" height="63.3"/><rect x="698" y="367.8" width="1" height="63.2"/><rect x="699" y="367.3" width="1" height="63.7"/><rect x="700" y="365.8" width="1" height="65.2"/><rect x="701" y="365.8" width="1" height="65.2"/><rect x="702" y="363.5" width="1" height="67.5"/><rect x="703" y="363.1" width="1" height="67.9"/><rect x="704" y="368.7" width="1" height="62.3"/><rect x="705" y="368.4" width="1" height="62.6"/><rect x="706" y="367.9" width="1" height="63.1"/><rect x="707" y="366.3" width="1" height="64.7"/><rect x="708" y="372.0" width="1" height="59.0"/><rect x="709" y="367.6" width="1" height="63.4"/><rect x="710" y="370.2" width="1" height="60.8"/><rect x="711" y="365.7" width="1" height="65.3"/><rect x="712" y="365.6" width="1" height="65.4"/><rect x="713" y="365.1" width="1" height="65.9"/><rect x="714" y="366.8" width="1" height="64.2"/><rect x="715" y="367.2" width="1" height="63.8"/><rect x="716" y="368.6" width="1" height="62.4"/><rect x="717" y="368.5" width="1" height="62.5"/><rect x="718" y="368.6" width="1" height="62.4"/><rect x="719" y="368.9" width="1" height="62.1"/><rect x="720" y="369.9" width="1" height="61.1"/><rect x="721" y="368.7" width="1" height="62.3"/><rect x="722" y="369.4" width="1" height="61.6"/><rect x="723" y="370.1" width="1" height="60.9"/><rect x="724" y="367.9" width="1" height="63.1"/><rect x="725" y="368.3" width="1" height="62.7"/><rect x="726" y="366.7" width="1" height="64.3"/><rect x="727" y="366.3" width="1" height="64.7"/><rect x="728" y="368.7" width="1" height="62.3"/><rect x="729" y="368.2" width="1" height="62.8"/><rect x="730" y="366.7" width="1" height="64.3"/><rect x="731" y="365.9" width="1" height="65.1"/><rect x="732" y="369.8" width="1" height="61.2"/><rect x="733" y="369.9" width="1" height="61.1"/><rect x="734" y="366.8" width="1" height="64.2"/><rect x="735" y="365.4" width="1" height="65.6"/><rect x="736" y="369.2" width="1" height="61.8"/><rect x="737" y="369.2" width="1" height="61.8"/><rect x="738" y="367.2" width="1" height="63.8"/><rect x="739" y="367.6" width="1" height="63.4"/><rect x="740" y="367.0" width="1" height="64.0"/><rect x="741" y="366.0" width="1" height="65.0"/><rect x="742" y="366.8" width="1" height="64.2"/><rect x="743" y="367.3" width="1" height="63.7"/><rect x="744" y="369.2" width="1" height="61.8"/><rect x="745" y="370.1" width="1" height="60.9"/><rect x="746" y="367.1" width="1" height="63.9"/><rect x="747" y="367.0" width="1" height="64.0"/><rect x="748" y="367.9" width="1" height="63.1"/><rect x="749" y="367.8" width="1" height="63.2"/><rect x="750" y="369.2" width="1" height="61.8"/><rect x="751" y="366.3" width="1" height="64.7"/><rect x="752" y="366.0" width="1" height="65.0"/><rect x="753" y="365.6" width="1" height="65.4"/><rect x="754" y="368.6" width="1" height="62.4"/><rect x="755" y="369.7" width="1" height="61.3"/><rect x="756" y="365.5" width="1" height="65.5"/><rect x="757" y="366.8" width="1" height="64.2"/><rect x="758" y="367.0" width="1" height="64.0"/><rect x="759" y="367.6" width="1" height="63.4"/><rect x="760" y="366.1" width="1" height="64.9"/><rect x="761" y="366.2" width="1" height="64.8"/><rect x="762" y="366.1" width="1" height="64.9"/><rect x="763" y="366.0" width="1" height="65.0"/><rect x="764" y="365.4" width="1" height="65.6"/><rect x="765" y="365.5" width="1" height="65.5"/><rect x="766" y="366.7" width="1" height="64.3"/><rect x="767" y="366.6" width="1" height="64.4"/><rect x="768" y="366.0" width="1" height="65.0"/><rect x="769" y="368.5" width="1" height="62.5"/><rect x="770" y="366.1" width="1" height="64.9"/><rect x="771" y="366.9" width="1" height="64.1"/><rect x="772" y="369.1" width="1" height="61.9"/><rect x="773" y="365.5" width="1" height="65.5"/><rect x="774" y="366.6" width="1" height="64.4"/><rect x="775" y="366.3" width="1" height="64.7"/><rect x="776" y="369.6" width="1" height="61.4"/><rect x="777" y="366.0" width="1" height="65.0"/><rect x="778" y="366.0" width="1" height="65.0"/><rect x="779" y="365.6" width="1" height="65.4"/><rect x="780" y="365.0" width="1" height="66.0"/><rect x="781" y="345.0" width="1" height="86.0"/><rect x="782" y="367.2" width="1" height="63.8"/><rect x="783" y="366.9" width="1" height="64.1"/><rect x="784" y="365.5" width="1" height="65.5"/><rect x="785" y="364.5" width="1" height="66.5"/><rect x="786" y="365.0" width="1" height="66.0"/><rect x="787" y="367.0" width="1" height="64.0"/><rect x="788" y="367.3" width="1" height="63.7"/><rect x="789" y="367.1" width="1" height="63.9"/><rect x="790" y="367.0" width="1" height="64.0"/><rect x="791" y="365.9" width="1" height="65.1"/><rect x="792" y="369.4" width="1" height="61.6"/><rect x="793" y="368.3" width="1" height="62.7"/><rect x="794" y="366.8" width="1" height="64.2"/><rect x="795" y="368.2" width="1" height="62.8"/><rect x="796" y="365.1" width="1" height="65.9"/><rect x="797" y="365.0" width="1" height="66.0"/><rect x="798" y="366.4" width="1" height="64.6"/><rect x="799" y="366.5" width="1" height="64.5"/><rect x="800" y="367.0" width="1" height="64.0"/><rect x="801" y="366.7" width="1" height="64.3"/><rect x="802" y="364.9" width="1" height="66.1"/><rect x="803" y="364.6" width="1" height="66.4"/><rect x="804" y="366.9" width="1" height="64.1"/><rect x="805" y="364.3" width="1" height="66.7"/><rect x="806" y="364.6" width="1" height="66.4"/><rect x="807" y="365.6" width="1" height="65.4"/><rect x="808" y="368.3" width="1" height="62.7"/><rect x="809" y="370.6" width="1" height="60.4"/><rect x="810" y="366.2" width="1" height="64.8"/><rect x="811" y="365.5" width="1" height="65.5"/><rect x="812" y="342.0" width="1" height="89.0"/><rect x="813" y="365.2" width="1" height="65.8"/><rect x="814" y="369.0" width="1" height="62.0"/><rect x="815" y="364.9" width="1" height="66.1"/><rect x="816" y="365.1" width="1" height="65.9"/><rect x="817" y="365.8" width="1" height="65.2"/><rect x="818" y="367.3" width="1" height="63.7"/><rect x="819" y="367.1" width="1" height="63.9"/><rect x="820" y="364.7" width="1" height="66.3"/><rect x="821" y="364.6" width="1" height="66.4"/><rect x="822" y="316.0" width="1" height="115.0"/><rect x="823" y="318.0" width="1" height="113.0"/><rect x="824" y="367.5" width="1" height="63.5"/><rect x="825" y="368.0" width="1" height="63.0"/><rect x="826" y="367.1" width="1" height="63.9"/><rect x="827" y="369.0" width="1" height="62.0"/><rect x="828" y="367.7" width="1" height="63.3"/><rect x="829" y="367.1" width="1" height="63.9"/><rect x="830" y="364.3" width="1" height="66.7"/><rect x="831" y="365.1" width="1" height="65.9"/><rect x="832" y="364.0" width="1" height="67.0"/><rect x="833" y="365.2" width="1" height="65.8"/><rect x="834" y="366.0" width="1" height="65.0"/><rect x="835" y="365.3" width="1" height="65.7"/><rect x="836" y="362.0" width="1" height="69.0"/><rect x="837" y="365.8" width="1" height="65.2"/><rect x="838" y="366.5" width="1" height="64.5"/><rect x="839" y="366.9" width="1" height="64.1"/><rect x="840" y="367.8" width="1" height="63.2"/><rect x="841" y="367.5" width="1" height="63.5"/><rect x="842" y="367.0" width="1" height="64.0"/><rect x="843" y="366.9" width="1" height="64.1"/><rect x="844" y="364.9" width="1" height="66.1"/><rect x="845" y="365.1" width="1" height="65.9"/><rect x="846" y="367.2" width="1" height="63.8"/><rect x="847" y="367.1" width="1" height="63.9"/><rect x="848" y="363.7" width="1" height="67.3"/><rect x="849" y="364.1" width="1" height="66.9"/><rect x="850" y="364.4" width="1" height="66.6"/><rect x="851" y="363.9" width="1" height="67.1"/><rect x="852" y="370.6" width="1" height="60.4"/><rect x="853" y="367.1" width="1" height="63.9"/><rect x="854" y="364.3" width="1" height="66.7"/><rect x="855" y="372.1" width="1" height="58.9"/><rect x="856" y="366.8" width="1" height="64.2"/><rect x="857" y="364.2" width="1" height="66.8"/><rect x="858" y="366.9" width="1" height="64.1"/><rect x="859" y="367.3" width="1" height="63.7"/><rect x="860" y="365.1" width="1" height="65.9"/><rect x="861" y="364.3" width="1" height="66.7"/><rect x="862" y="364.3" width="1" height="66.7"/><rect x="863" y="356.0" width="1" height="75.0"/><rect x="864" y="365.0" width="1" height="66.0"/><rect x="865" y="366.7" width="1" height="64.3"/><rect x="866" y="367.5" width="1" height="63.5"/><rect x="867" y="366.8" width="1" height="64.2"/><rect x="868" y="364.5" width="1" height="66.5"/><rect x="869" y="366.6" width="1" height="64.4"/><rect x="870" y="365.7" width="1" height="65.3"/><rect x="871" y="372.8" width="1" height="58.2"/><rect x="872" y="366.7" width="1" height="64.3"/><rect x="873" y="367.1" width="1" height="63.9"/><rect x="874" y="365.4" width="1" height="65.6"/><rect x="875" y="366.0" width="1" height="65.0"/><rect x="876" y="367.2" width="1" height="63.8"/><rect x="877" y="367.6" width="1" height="63.4"/><rect x="878" y="364.5" width="1" height="66.5"/><rect x="879" y="365.1" width="1" height="65.9"/><rect x="880" y="368.4" width="1" height="62.6"/><rect x="881" y="368.5" width="1" height="62.5"/><rect x="882" y="365.5" width="1" height="65.5"/><rect x="883" y="366.4" width="1" height="64.6"/><rect x="884" y="319.0" width="1" height="112.0"/><rect x="885" y="365.0" width="1" height="66.0"/><rect x="886" y="365.3" width="1" height="65.7"/><rect x="887" y="364.1" width="1" height="66.9"/><rect x="888" y="363.5" width="1" height="67.5"/><rect x="889" y="363.6" width="1" height="67.4"/><rect x="890" y="365.4" width="1" height="65.6"/><rect x="891" y="364.1" width="1" height="66.9"/><rect x="892" y="363.3" width="1" height="67.7"/><rect x="893" y="365.5" width="1" height="65.5"/><rect x="894" y="365.7" width="1" height="65.3"/><rect x="895" y="364.7" width="1" height="66.3"/><rect x="896" y="362.1" width="1" height="68.9"/><rect x="897" y="361.9" width="1" height="69.1"/><rect x="898" y="367.1" width="1" height="63.9"/><rect x="899" y="365.6" width="1" height="65.4"/><rect x="900" y="366.0" width="1" height="65.0"/><rect x="901" y="366.6" width="1" height="64.4"/><rect x="902" y="366.7" width="1" height="64.3"/><rect x="903" y="363.1" width="1" height="67.9"/><rect x="904" y="365.1" width="1" height="65.9"/><rect x="905" y="365.3" width="1" height="65.7"/><rect x="906" y="367.2" width="1" height="63.8"/><rect x="907" y="367.3" width="1" height="63.7"/><rect x="908" y="366.9" width="1" height="64.1"/><rect x="909" y="366.9" width="1" height="64.1"/><rect x="910" y="365.0" width="1" height="66.0"/><rect x="911" y="366.0" width="1" height="65.0"/><rect x="912" y="366.0" width="1" height="65.0"/><rect x="913" y="365.7" width="1" height="65.3"/><rect x="914" y="363.6" width="1" height="67.4"/><rect x="915" y="364.1" width="1" height="66.9"/><rect x="916" y="362.1" width="1" height="68.9"/><rect x="917" y="362.0" width="1" height="69.0"/><rect x="918" y="363.8" width="1" height="67.2"/><rect x="919" y="362.7" width="1" height="68.3"/><rect x="920" y="361.8" width="1" height="69.2"/><rect x="921" y="360.5" width="1" height="70.5"/><rect x="922" y="360.3" width="1" height="70.7"/><rect x="923" y="359.5" width="1" height="71.5"/><rect x="924" y="358.2" width="1" height="72.8"/><rect x="925" y="355.7" width="1" height="75.3"/><rect x="926" y="354.7" width="1" height="76.3"/><rect x="927" y="354.1" width="1" height="76.9"/><rect x="928" y="354.7" width="1" height="76.3"/><rect x="929" y="353.9" width="1" height="77.1"/><rect x="930" y="334.0" width="1" height="97.0"/><rect x="931" y="352.3" width="1" height="78.7"/><rect x="932" y="352.5" width="1" height="78.5"/><rect x="933" y="354.0" width="1" height="77.0"/><rect x="934" y="354.5" width="1" height="76.5"/><rect x="935" y="354.9" width="1" height="76.1"/><rect x="936" y="356.4" width="1" height="74.6"/><rect x="937" y="357.8" width="1" height="73.2"/><rect x="938" y="361.0" width="1" height="70.0"/><rect x="939" y="363.2" width="1" height="67.8"/><rect x="940" y="363.6" width="1" height="67.4"/><rect x="941" y="363.5" width="1" height="67.5"/><rect x="942" y="362.2" width="1" height="68.8"/><rect x="943" y="362.2" width="1" height="68.8"/><rect x="944" y="362.8" width="1" height="68.2"/><rect x="945" y="363.0" width="1" height="68.0"/><rect x="946" y="363.2" width="1" height="67.8"/><rect x="947" y="364.5" width="1" height="66.5"/><rect x="948" y="364.3" width="1" height="66.7"/><rect x="949" y="363.3" width="1" height="67.7"/><rect x="950" y="366.2" width="1" height="64.8"/><rect x="951" y="366.0" width="1" height="65.0"/><rect x="952" y="360.1" width="1" height="70.9"/><rect x="953" y="360.4" width="1" height="70.6"/><rect x="954" y="367.2" width="1" height="63.8"/><rect x="955" y="365.9" width="1" height="65.1"/><rect x="956" y="364.0" width="1" height="67.0"/><rect x="957" y="363.7" width="1" height="67.3"/><rect x="958" y="363.6" width="1" height="67.4"/><rect x="959" y="364.9" width="1" height="66.1"/><rect x="960" y="362.8" width="1" height="68.2"/><rect x="961" y="363.1" width="1" height="67.9"/><rect x="962" y="364.3" width="1" height="66.7"/><rect x="963" y="364.3" width="1" height="66.7"/><rect x="964" y="364.0" width="1" height="67.0"/><rect x="965" y="362.5" width="1" height="68.5"/><rect x="966" y="365.6" width="1" height="65.4"/><rect x="967" y="363.7" width="1" height="67.3"/><rect x="968" y="364.6" width="1" height="66.4"/><rect x="969" y="365.4" width="1" height="65.6"/><rect x="970" y="365.4" width="1" height="65.6"/><rect x="971" y="364.4" width="1" height="66.6"/><rect x="972" y="368.3" width="1" height="62.7"/><rect x="973" y="368.7" width="1" height="62.3"/><rect x="974" y="362.5" width="1" height="68.5"/><rect x="975" y="363.4" width="1" height="67.6"/><rect x="976" y="363.0" width="1" height="68.0"/><rect x="977" y="361.9" width="1" height="69.1"/><rect x="978" y="363.3" width="1" height="67.7"/><rect x="979" y="365.7" width="1" height="65.3"/><rect x="980" y="364.9" width="1" height="66.1"/><rect x="981" y="338.0" width="1" height="93.0"/><rect x="982" y="365.6" width="1" height="65.4"/><rect x="983" y="365.7" width="1" height="65.3"/><rect x="984" y="364.2" width="1" height="66.8"/><rect x="985" y="363.0" width="1" height="68.0"/><rect x="986" y="363.7" width="1" height="67.3"/><rect x="987" y="364.5" width="1" height="66.5"/><rect x="988" y="363.1" width="1" height="67.9"/><rect x="989" y="362.9" width="1" height="68.1"/><rect x="990" y="361.4" width="1" height="69.6"/><rect x="991" y="362.2" width="1" height="68.8"/><rect x="992" y="362.5" width="1" height="68.5"/><rect x="993" y="363.4" width="1" height="67.6"/><rect x="994" y="367.3" width="1" height="63.7"/><rect x="995" y="367.7" width="1" height="63.3"/><rect x="996" y="365.1" width="1" height="65.9"/><rect x="997" y="364.3" width="1" height="66.7"/><rect x="998" y="366.1" width="1" height="64.9"/><rect x="999" y="365.2" width="1" height="65.8"/><rect x="1000" y="361.9" width="1" height="69.1"/><rect x="1001" y="362.8" width="1" height="68.2"/><rect x="1002" y="364.1" width="1" height="66.9"/><rect x="1003" y="363.2" width="1" height="67.8"/><rect x="1004" y="364.7" width="1" height="66.3"/><rect x="1005" y="364.6" width="1" height="66.4"/><rect x="1006" y="364.8" width="1" height="66.2"/><rect x="1007" y="363.8" width="1" height="67.2"/><rect x="1008" y="364.6" width="1" height="66.4"/><rect x="1009" y="364.9" width="1" height="66.1"/><rect x="1010" y="365.8" width="1" height="65.2"/><rect x="1011" y="365.4" width="1" height="65.6"/><rect x="1012" y="363.7" width="1" height="67.3"/><rect x="1013" y="363.9" width="1" height="67.1"/><rect x="1014" y="364.5" width="1" height="66.5"/><rect x="1015" y="365.8" width="1" height="65.2"/><rect x="1016" y="358.6" width="1" height="72.4"/><rect x="1017" y="354.9" width="1" height="76.1"/><rect x="1018" y="341.2" width="1" height="89.8"/><rect x="1019" y="342.2" width="1" height="88.8"/><rect x="1020" y="344.7" width="1" height="86.3"/><rect x="1021" y="342.6" width="1" height="88.4"/><rect x="1022" y="339.4" width="1" height="91.6"/><rect x="1023" y="334.6" width="1" height="96.4"/><rect x="1024" y="342.4" width="1" height="88.6"/><rect x="1025" y="338.4" width="1" height="92.6"/><rect x="1026" y="335.3" width="1" height="95.7"/><rect x="1027" y="337.6" width="1" height="93.4"/><rect x="1028" y="337.4" width="1" height="93.6"/><rect x="1029" y="336.8" width="1" height="94.2"/><rect x="1030" y="335.1" width="1" height="95.9"/><rect x="1031" y="332.8" width="1" height="98.2"/><rect x="1032" y="336.4" width="1" height="94.6"/><rect x="1033" y="337.1" width="1" height="93.9"/><rect x="1034" y="336.6" width="1" height="94.4"/><rect x="1035" y="336.5" width="1" height="94.5"/><rect x="1036" y="338.0" width="1" height="93.0"/><rect x="1037" y="339.8" width="1" height="91.2"/><rect x="1038" y="336.7" width="1" height="94.3"/><rect x="1039" y="348.3" width="1" height="82.7"/><rect x="1040" y="337.1" width="1" height="93.9"/><rect x="1041" y="338.1" width="1" height="92.9"/><rect x="1042" y="342.9" width="1" height="88.1"/><rect x="1043" y="344.2" width="1" height="86.8"/><rect x="1044" y="343.7" width="1" height="87.3"/><rect x="1045" y="344.0" width="1" height="87.0"/><rect x="1046" y="348.1" width="1" height="82.9"/><rect x="1047" y="351.3" width="1" height="79.7"/><rect x="1048" y="348.7" width="1" height="82.3"/><rect x="1049" y="351.0" width="1" height="80.0"/><rect x="1050" y="354.7" width="1" height="76.3"/><rect x="1051" y="354.9" width="1" height="76.1"/><rect x="1052" y="357.6" width="1" height="73.4"/><rect x="1053" y="358.3" width="1" height="72.7"/><rect x="1054" y="362.2" width="1" height="68.8"/><rect x="1055" y="362.5" width="1" height="68.5"/><rect x="1056" y="357.7" width="1" height="73.3"/><rect x="1057" y="355.7" width="1" height="75.3"/><rect x="1058" y="356.8" width="1" height="74.2"/><rect x="1059" y="357.4" width="1" height="73.6"/><rect x="1060" y="356.4" width="1" height="74.6"/><rect x="1061" y="353.1" width="1" height="77.9"/><rect x="1062" y="349.7" width="1" height="81.3"/><rect x="1063" y="351.2" width="1" height="79.8"/><rect x="1064" y="349.2" width="1" height="81.8"/><rect x="1065" y="348.3" width="1" height="82.7"/><rect x="1066" y="352.1" width="1" height="78.9"/><rect x="1067" y="352.6" width="1" height="78.4"/><rect x="1068" y="350.4" width="1" height="80.6"/><rect x="1069" y="350.4" width="1" height="80.6"/><rect x="1070" y="350.8" width="1" height="80.2"/><rect x="1071" y="353.9" width="1" height="77.1"/><rect x="1072" y="352.0" width="1" height="79.0"/><rect x="1073" y="353.7" width="1" height="77.3"/><rect x="1074" y="353.9" width="1" height="77.1"/><rect x="1075" y="353.8" width="1" height="77.2"/><rect x="1076" y="353.6" width="1" height="77.4"/><rect x="1077" y="354.0" width="1" height="77.0"/><rect x="1078" y="356.9" width="1" height="74.1"/><rect x="1079" y="356.7" width="1" height="74.3"/><rect x="1080" y="357.6" width="1" height="73.4"/><rect x="1081" y="358.1" width="1" height="72.9"/><rect x="1082" y="356.3" width="1" height="74.7"/><rect x="1083" y="358.0" width="1" height="73.0"/><rect x="1084" y="357.0" width="1" height="74.0"/><rect x="1085" y="356.6" width="1" height="74.4"/><rect x="1086" y="357.4" width="1" height="73.6"/><rect x="1087" y="357.0" width="1" height="74.0"/><rect x="1088" y="355.8" width="1" height="75.2"/><rect x="1089" y="355.4" width="1" height="75.6"/><rect x="1090" y="359.1" width="1" height="71.9"/><rect x="1091" y="360.0" width="1" height="71.0"/><rect x="1092" y="353.4" width="1" height="77.6"/><rect x="1093" y="354.0" width="1" height="77.0"/><rect x="1094" y="355.1" width="1" height="75.9"/><rect x="1095" y="358.0" width="1" height="73.0"/><rect x="1096" y="355.7" width="1" height="75.3"/><rect x="1097" y="357.1" width="1" height="73.9"/><rect x="1098" y="359.6" width="1" height="71.4"/><rect x="1099" y="360.7" width="1" height="70.3"/><rect x="1100" y="357.3" width="1" height="73.7"/><rect x="1101" y="357.5" width="1" height="73.5"/><rect x="1102" y="355.9" width="1" height="75.1"/><rect x="1103" y="353.4" width="1" height="77.6"/><rect x="1104" y="352.8" width="1" height="78.2"/><rect x="1105" y="352.2" width="1" height="78.8"/><rect x="1106" y="352.2" width="1" height="78.8"/><rect x="1107" y="352.2" width="1" height="78.8"/><rect x="1108" y="354.2" width="1" height="76.8"/><rect x="1109" y="355.3" width="1" height="75.7"/><rect x="1110" y="353.1" width="1" height="77.9"/><rect x="1111" y="355.4" width="1" height="75.6"/><rect x="1112" y="355.0" width="1" height="76.0"/><rect x="1113" y="355.0" width="1" height="76.0"/><rect x="1114" y="352.3" width="1" height="78.7"/><rect x="1115" y="351.0" width="1" height="80.0"/><rect x="1116" y="356.1" width="1" height="74.9"/><rect x="1117" y="355.9" width="1" height="75.1"/><rect x="1118" y="354.1" width="1" height="76.9"/><rect x="1119" y="353.9" width="1" height="77.1"/><rect x="1120" y="354.9" width="1" height="76.1"/><rect x="1121" y="354.9" width="1" height="76.1"/><rect x="1122" y="355.2" width="1" height="75.8"/><rect x="1123" y="354.1" width="1" height="76.9"/><rect x="1124" y="351.4" width="1" height="79.6"/><rect x="1125" y="351.8" width="1" height="79.2"/><rect x="1126" y="352.7" width="1" height="78.3"/><rect x="1127" y="352.5" width="1" height="78.5"/><rect x="1128" y="356.6" width="1" height="74.4"/><rect x="1129" y="355.4" width="1" height="75.6"/><rect x="1130" y="352.6" width="1" height="78.4"/><rect x="1131" y="354.6" width="1" height="76.4"/><rect x="1132" y="355.8" width="1" height="75.2"/><rect x="1133" y="356.7" width="1" height="74.3"/><rect x="1134" y="356.8" width="1" height="74.2"/><rect x="1135" y="354.0" width="1" height="77.0"/><rect x="1136" y="358.3" width="1" height="72.7"/><rect x="1137" y="347.0" width="1" height="84.0"/><rect x="1138" y="329.1" width="1" height="101.9"/><rect x="1139" y="327.5" width="1" height="103.5"/><rect x="1140" y="323.3" width="1" height="107.7"/><rect x="1141" y="307.0" width="1" height="124.0"/><rect x="1142" y="310.0" width="1" height="121.0"/><rect x="1143" y="321.9" width="1" height="109.1"/><rect x="1144" y="314.0" width="1" height="117.0"/><rect x="1145" y="324.0" width="1" height="107.0"/><rect x="1146" y="322.0" width="1" height="109.0"/><rect x="1147" y="332.9" width="1" height="98.1"/><rect x="1148" y="335.9" width="1" height="95.1"/><rect x="1149" y="337.2" width="1" height="93.8"/><rect x="1150" y="338.8" width="1" height="92.2"/><rect x="1151" y="340.3" width="1" height="90.7"/><rect x="1152" y="343.3" width="1" height="87.7"/><rect x="1153" y="337.2" width="1" height="93.8"/><rect x="1154" y="340.6" width="1" height="90.4"/><rect x="1155" y="340.4" width="1" height="90.6"/><rect x="1156" y="340.7" width="1" height="90.3"/><rect x="1157" y="338.9" width="1" height="92.1"/><rect x="1158" y="337.7" width="1" height="93.3"/><rect x="1159" y="336.7" width="1" height="94.3"/><rect x="1160" y="344.0" width="1" height="87.0"/><rect x="1161" y="342.2" width="1" height="88.8"/><rect x="1162" y="333.3" width="1" height="97.7"/><rect x="1163" y="330.5" width="1" height="100.5"/><rect x="1164" y="330.6" width="1" height="100.4"/><rect x="1165" y="329.2" width="1" height="101.8"/><rect x="1166" y="331.6" width="1" height="99.4"/><rect x="1167" y="327.7" width="1" height="103.3"/><rect x="1168" y="324.2" width="1" height="106.8"/><rect x="1169" y="322.5" width="1" height="108.5"/><rect x="1170" y="329.3" width="1" height="101.7"/><rect x="1171" y="328.5" width="1" height="102.5"/><rect x="1172" y="318.0" width="1" height="113.0"/><rect x="1173" y="318.9" width="1" height="112.1"/><rect x="1174" y="320.9" width="1" height="110.1"/><rect x="1175" y="313.0" width="1" height="118.0"/><rect x="1176" y="324.8" width="1" height="106.2"/><rect x="1177" y="325.1" width="1" height="105.9"/><rect x="1178" y="312.0" width="1" height="119.0"/><rect x="1179" y="326.3" width="1" height="104.7"/><rect x="1180" y="328.4" width="1" height="102.6"/><rect x="1181" y="320.0" width="1" height="111.0"/><rect x="1182" y="334.1" width="1" height="96.9"/><rect x="1183" y="335.1" width="1" height="95.9"/><rect x="1184" y="335.8" width="1" height="95.2"/><rect x="1185" y="336.8" width="1" height="94.2"/><rect x="1186" y="339.8" width="1" height="91.2"/><rect x="1187" y="342.8" width="1" height="88.2"/><rect x="1188" y="336.5" width="1" height="94.5"/><rect x="1189" y="341.7" width="1" height="89.3"/><rect x="1190" y="338.3" width="1" height="92.7"/><rect x="1191" y="338.2" width="1" height="92.8"/><rect x="1192" y="340.2" width="1" height="90.8"/><rect x="1193" y="339.7" width="1" height="91.3"/><rect x="1194" y="340.5" width="1" height="90.5"/><rect x="1195" y="337.0" width="1" height="94.0"/><rect x="1196" y="336.4" width="1" height="94.6"/><rect x="1197" y="329.0" width="1" height="102.0"/><rect x="1198" y="332.7" width="1" height="98.3"/><rect x="1199" y="338.3" width="1" height="92.7"/><rect x="1200" y="344.4" width="1" height="86.6"/><rect x="1201" y="350.3" width="1" height="80.7"/><rect x="1202" y="358.0" width="1" height="73.0"/><rect x="1203" y="363.4" width="1" height="67.6"/><rect x="1204" y="356.8" width="1" height="74.2"/><rect x="1205" y="360.4" width="1" height="70.6"/><rect x="1206" y="358.5" width="1" height="72.5"/><rect x="1207" y="358.6" width="1" height="72.4"/><rect x="1208" y="356.5" width="1" height="74.5"/><rect x="1209" y="356.4" width="1" height="74.6"/><rect x="1210" y="357.1" width="1" height="73.9"/><rect x="1211" y="356.9" width="1" height="74.1"/><rect x="1212" y="358.3" width="1" height="72.7"/><rect x="1213" y="358.3" width="1" height="72.7"/><rect x="1214" y="359.1" width="1" height="71.9"/><rect x="1215" y="357.9" width="1" height="73.1"/><rect x="1216" y="360.5" width="1" height="70.5"/><rect x="1217" y="360.2" width="1" height="70.8"/><rect x="1218" y="360.1" width="1" height="70.9"/><rect x="1219" y="360.8" width="1" height="70.2"/><rect x="1220" y="360.4" width="1" height="70.6"/><rect x="1221" y="361.3" width="1" height="69.7"/><rect x="1222" y="360.3" width="1" height="70.7"/><rect x="1223" y="360.2" width="1" height="70.8"/><rect x="1224" y="357.5" width="1" height="73.5"/><rect x="1225" y="358.8" width="1" height="72.2"/><rect x="1226" y="358.9" width="1" height="72.1"/><rect x="1227" y="360.2" width="1" height="70.8"/><rect x="1228" y="359.3" width="1" height="71.7"/><rect x="1229" y="359.6" width="1" height="71.4"/><rect x="1230" y="349.0" width="1" height="82.0"/><rect x="1231" y="362.8" width="1" height="68.2"/><rect x="1232" y="363.4" width="1" height="67.6"/><rect x="1233" y="360.3" width="1" height="70.7"/><rect x="1234" y="362.1" width="1" height="68.9"/><rect x="1235" y="363.4" width="1" height="67.6"/><rect x="1236" y="359.7" width="1" height="71.3"/><rect x="1237" y="359.7" width="1" height="71.3"/><rect x="1238" y="361.9" width="1" height="69.1"/><rect x="1239" y="360.8" width="1" height="70.2"/><rect x="1240" y="361.0" width="1" height="70.0"/><rect x="1241" y="361.5" width="1" height="69.5"/><rect x="1242" y="360.7" width="1" height="70.3"/><rect x="1243" y="361.8" width="1" height="69.2"/><rect x="1244" y="362.5" width="1" height="68.5"/><rect x="1245" y="362.6" width="1" height="68.4"/><rect x="1246" y="363.5" width="1" height="67.5"/><rect x="1247" y="364.6" width="1" height="66.4"/><rect x="1248" y="363.9" width="1" height="67.1"/><rect x="1249" y="365.1" width="1" height="65.9"/><rect x="1250" y="364.1" width="1" height="66.9"/><rect x="1251" y="370.5" width="1" height="60.5"/><rect x="1252" y="363.1" width="1" height="67.9"/><rect x="1253" y="362.8" width="1" height="68.2"/><rect x="1254" y="365.7" width="1" height="65.3"/><rect x="1255" y="364.5" width="1" height="66.5"/><rect x="1256" y="365.7" width="1" height="65.3"/><rect x="1257" y="366.2" width="1" height="64.8"/><rect x="1258" y="365.9" width="1" height="65.1"/><rect x="1259" y="366.0" width="1" height="65.0"/><rect x="1260" y="364.0" width="1" height="67.0"/><rect x="1261" y="364.4" width="1" height="66.6"/><rect x="1262" y="367.1" width="1" height="63.9"/><rect x="1263" y="366.0" width="1" height="65.0"/><rect x="1264" y="366.5" width="1" height="64.5"/><rect x="1265" y="366.4" width="1" height="64.6"/><rect x="1266" y="368.3" width="1" height="62.7"/><rect x="1267" y="367.1" width="1" height="63.9"/><rect x="1268" y="368.7" width="1" height="62.3"/><rect x="1269" y="368.7" width="1" height="62.3"/><rect x="1270" y="368.8" width="1" height="62.2"/><rect x="1271" y="368.8" width="1" height="62.2"/><rect x="1272" y="362.9" width="1" height="68.1"/><rect x="1273" y="365.4" width="1" height="65.6"/><rect x="1274" y="368.7" width="1" height="62.3"/><rect x="1275" y="368.7" width="1" height="62.3"/><rect x="1276" y="365.6" width="1" height="65.4"/><rect x="1277" y="368.0" width="1" height="63.0"/><rect x="1278" y="366.0" width="1" height="65.0"/><rect x="1279" y="365.1" width="1" height="65.9"/><rect x="1280" y="368.8" width="1" height="62.2"/><rect x="1281" y="369.0" width="1" height="62.0"/><rect x="1282" y="366.6" width="1" height="64.4"/><rect x="1283" y="366.6" width="1" height="64.4"/><rect x="1284" y="369.3" width="1" height="61.7"/><rect x="1285" y="372.9" width="1" height="58.1"/><rect x="1286" y="366.3" width="1" height="64.7"/><rect x="1287" y="365.8" width="1" height="65.2"/><rect x="1288" y="367.5" width="1" height="63.5"/><rect x="1289" y="368.7" width="1" height="62.3"/><rect x="1290" y="368.9" width="1" height="62.1"/><rect x="1291" y="368.5" width="1" height="62.5"/><rect x="1292" y="367.7" width="1" height="63.3"/><rect x="1293" y="368.1" width="1" height="62.9"/><rect x="1294" y="367.2" width="1" height="63.8"/><rect x="1295" y="367.3" width="1" height="63.7"/><rect x="1296" y="366.6" width="1" height="64.4"/><rect x="1297" y="366.1" width="1" height="64.9"/><rect x="1298" y="368.4" width="1" height="62.6"/><rect x="1299" y="369.1" width="1" height="61.9"/><rect x="1300" y="370.7" width="1" height="60.3"/><rect x="1301" y="370.3" width="1" height="60.7"/><rect x="1302" y="365.5" width="1" height="65.5"/><rect x="1303" y="366.6" width="1" height="64.4"/><rect x="1304" y="368.3" width="1" height="62.7"/><rect x="1305" y="368.2" width="1" height="62.8"/><rect x="1306" y="365.8" width="1" height="65.2"/><rect x="1307" y="366.5" width="1" height="64.5"/><rect x="1308" y="367.2" width="1" height="63.8"/><rect x="1309" y="370.0" width="1" height="61.0"/><rect x="1310" y="369.7" width="1" height="61.3"/><rect x="1311" y="369.2" width="1" height="61.8"/><rect x="1312" y="366.3" width="1" height="64.7"/><rect x="1313" y="372.9" width="1" height="58.1"/><rect x="1314" y="369.8" width="1" height="61.2"/><rect x="1315" y="369.8" width="1" height="61.2"/><rect x="1316" y="368.8" width="1" height="62.2"/><rect x="1317" y="341.0" width="1" height="90.0"/><rect x="1318" y="366.4" width="1" height="64.6"/><rect x="1319" y="365.2" width="1" height="65.8"/><rect x="1320" y="369.1" width="1" height="61.9"/><rect x="1321" y="370.0" width="1" height="61.0"/><rect x="1322" y="370.0" width="1" height="61.0"/><rect x="1323" y="366.8" width="1" height="64.2"/><rect x="1324" y="365.8" width="1" height="65.2"/><rect x="1325" y="368.1" width="1" height="62.9"/><rect x="1326" y="368.3" width="1" height="62.7"/><rect x="1327" y="368.3" width="1" height="62.7"/><rect x="1328" y="368.3" width="1" height="62.7"/><rect x="1329" y="367.6" width="1" height="63.4"/><rect x="1330" y="368.7" width="1" height="62.3"/><rect x="1331" y="369.2" width="1" height="61.8"/><rect x="1332" y="366.6" width="1" height="64.4"/><rect x="1333" y="367.5" width="1" height="63.5"/><rect x="1334" y="369.9" width="1" height="61.1"/><rect x="1335" y="366.9" width="1" height="64.1"/><rect x="1336" y="369.8" width="1" height="61.2"/><rect x="1337" y="369.1" width="1" height="61.9"/><rect x="1338" y="369.4" width="1" height="61.6"/><rect x="1339" y="370.1" width="1" height="60.9"/><rect x="1340" y="369.6" width="1" height="61.4"/><rect x="1341" y="368.7" width="1" height="62.3"/><rect x="1342" y="369.1" width="1" height="61.9"/><rect x="1343" y="370.0" width="1" height="61.0"/><rect x="1344" y="369.8" width="1" height="61.2"/><rect x="1345" y="370.1" width="1" height="60.9"/><rect x="1346" y="362.5" width="1" height="68.5"/><rect x="1347" y="362.0" width="1" height="69.0"/><rect x="1348" y="375.1" width="1" height="55.9"/><rect x="1349" y="374.0" width="1" height="57.0"/><rect x="1350" y="368.8" width="1" height="62.2"/><rect x="1351" y="370.1" width="1" height="60.9"/><rect x="1352" y="367.1" width="1" height="63.9"/><rect x="1353" y="365.9" width="1" height="65.1"/><rect x="1354" y="368.1" width="1" height="62.9"/><rect x="1355" y="369.2" width="1" height="61.8"/><rect x="1356" y="364.2" width="1" height="66.8"/><rect x="1357" y="363.9" width="1" height="67.1"/><rect x="1358" y="368.3" width="1" height="62.7"/><rect x="1359" y="368.8" width="1" height="62.2"/><rect x="1360" y="370.0" width="1" height="61.0"/><rect x="1361" y="369.7" width="1" height="61.3"/><rect x="1362" y="366.9" width="1" height="64.1"/><rect x="1363" y="366.9" width="1" height="64.1"/><rect x="1364" y="366.9" width="1" height="64.1"/><rect x="1365" y="366.6" width="1" height="64.4"/><rect x="1366" y="367.2" width="1" height="63.8"/><rect x="1367" y="368.4" width="1" height="62.6"/><rect x="1368" y="370.8" width="1" height="60.2"/><rect x="1369" y="370.7" width="1" height="60.3"/><rect x="1370" y="367.3" width="1" height="63.7"/><rect x="1371" y="367.9" width="1" height="63.1"/><rect x="1372" y="368.1" width="1" height="62.9"/><rect x="1373" y="368.2" width="1" height="62.8"/><rect x="1374" y="369.1" width="1" height="61.9"/><rect x="1375" y="368.8" width="1" height="62.2"/><rect x="1376" y="368.6" width="1" height="62.4"/><rect x="1377" y="368.7" width="1" height="62.3"/><rect x="1378" y="371.0" width="1" height="60.0"/><rect x="1379" y="371.1" width="1" height="59.9"/><rect x="1380" y="366.4" width="1" height="64.6"/><rect x="1381" y="365.9" width="1" height="65.1"/><rect x="1382" y="368.2" width="1" height="62.8"/><rect x="1383" y="368.5" width="1" height="62.5"/><rect x="1384" y="369.2" width="1" height="61.8"/><rect x="1385" y="366.0" width="1" height="65.0"/><rect x="1386" y="367.7" width="1" height="63.3"/><rect x="1387" y="367.7" width="1" height="63.3"/><rect x="1388" y="368.6" width="1" height="62.4"/><rect x="1389" y="369.5" width="1" height="61.5"/><rect x="1390" y="367.6" width="1" height="63.4"/><rect x="1391" y="366.5" width="1" height="64.5"/><rect x="1392" y="369.1" width="1" height="61.9"/><rect x="1393" y="369.6" width="1" height="61.4"/><rect x="1394" y="369.8" width="1" height="61.2"/><rect x="1395" y="371.0" width="1" height="60.0"/><rect x="1396" y="366.1" width="1" height="64.9"/><rect x="1397" y="367.1" width="1" height="63.9"/><rect x="1398" y="368.6" width="1" height="62.4"/><rect x="1399" y="370.6" width="1" height="60.4"/><rect x="1400" y="368.5" width="1" height="62.5"/><rect x="1401" y="366.7" width="1" height="64.3"/><rect x="1402" y="368.8" width="1" height="62.2"/><rect x="1403" y="366.0" width="1" height="65.0"/><rect x="1404" y="371.0" width="1" height="60.0"/><rect x="1405" y="369.7" width="1" height="61.3"/><rect x="1406" y="368.4" width="1" height="62.6"/><rect x="1407" y="368.4" width="1" height="62.6"/><rect x="1408" y="367.7" width="1" height="63.3"/><rect x="1409" y="367.3" width="1" height="63.7"/><rect x="1410" y="369.9" width="1" height="61.1"/><rect x="1411" y="369.0" width="1" height="62.0"/><rect x="1412" y="366.1" width="1" height="64.9"/><rect x="1413" y="367.0" width="1" height="64.0"/><rect x="1414" y="366.9" width="1" height="64.1"/><rect x="1415" y="367.0" width="1" height="64.0"/><rect x="1416" y="366.8" width="1" height="64.2"/><rect x="1417" y="367.0" width="1" height="64.0"/><rect x="1418" y="367.3" width="1" height="63.7"/><rect x="1419" y="367.5" width="1" height="63.5"/><rect x="1420" y="370.1" width="1" height="60.9"/><rect x="1421" y="370.8" width="1" height="60.2"/><rect x="1422" y="368.2" width="1" height="62.8"/><rect x="1423" y="367.6" width="1" height="63.4"/><rect x="1424" y="367.9" width="1" height="63.1"/><rect x="1425" y="368.3" width="1" height="62.7"/><rect x="1426" y="367.2" width="1" height="63.8"/><rect x="1427" y="370.3" width="1" height="60.7"/><rect x="1428" y="366.6" width="1" height="64.4"/><rect x="1429" y="368.6" width="1" height="62.4"/><rect x="1430" y="367.7" width="1" height="63.3"/><rect x="1431" y="367.0" width="1" height="64.0"/><rect x="1432" y="370.4" width="1" height="60.6"/><rect x="1433" y="369.8" width="1" height="61.2"/><rect x="1434" y="370.0" width="1" height="61.0"/><rect x="1435" y="371.1" width="1" height="59.9"/><rect x="1436" y="366.1" width="1" height="64.9"/><rect x="1437" y="366.3" width="1" height="64.7"/><rect x="1438" y="367.5" width="1" height="63.5"/><rect x="1439" y="367.2" width="1" height="63.8"/><rect x="1440" y="374.8" width="1" height="56.2"/><rect x="1441" y="375.2" width="1" height="55.8"/><rect x="1442" y="371.4" width="1" height="59.6"/><rect x="1443" y="370.1" width="1" height="60.9"/><rect x="1444" y="370.9" width="1" height="60.1"/><rect x="1445" y="369.6" width="1" height="61.4"/><rect x="1446" y="370.5" width="1" height="60.5"/><rect x="1447" y="370.9" width="1" height="60.1"/><rect x="1448" y="366.0" width="1" height="65.0"/><rect x="1449" y="365.7" width="1" height="65.3"/><rect x="1450" y="369.0" width="1" height="62.0"/><rect x="1451" y="369.4" width="1" height="61.6"/><rect x="1452" y="366.4" width="1" height="64.6"/><rect x="1453" y="366.5" width="1" height="64.5"/><rect x="1454" y="367.1" width="1" height="63.9"/><rect x="1455" y="366.3" width="1" height="64.7"/><rect x="1456" y="367.5" width="1" height="63.5"/><rect x="1457" y="367.3" width="1" height="63.7"/><rect x="1458" y="370.8" width="1" height="60.2"/><rect x="1459" y="369.9" width="1" height="61.1"/><rect x="1460" y="369.7" width="1" height="61.3"/><rect x="1461" y="369.8" width="1" height="61.2"/><rect x="1462" y="366.1" width="1" height="64.9"/><rect x="1463" y="367.0" width="1" height="64.0"/><rect x="1464" y="360.0" width="1" height="71.0"/><rect x="1465" y="368.4" width="1" height="62.6"/><rect x="1466" y="368.1" width="1" height="62.9"/><rect x="1467" y="368.7" width="1" height="62.3"/><rect x="1468" y="370.5" width="1" height="60.5"/><rect x="1469" y="366.8" width="1" height="64.2"/><rect x="1470" y="366.7" width="1" height="64.3"/><rect x="1471" y="368.2" width="1" height="62.8"/><rect x="1472" y="366.8" width="1" height="64.2"/><rect x="1473" y="366.9" width="1" height="64.1"/><rect x="1474" y="373.9" width="1" height="57.1"/><rect x="1475" y="373.9" width="1" height="57.1"/><rect x="1476" y="367.5" width="1" height="63.5"/><rect x="1477" y="367.7" width="1" height="63.3"/><rect x="1478" y="368.7" width="1" height="62.3"/><rect x="1479" y="369.7" width="1" height="61.3"/><rect x="1480" y="369.1" width="1" height="61.9"/><rect x="1481" y="369.8" width="1" height="61.2"/><rect x="1482" y="365.0" width="1" height="66.0"/><rect x="1483" y="364.1" width="1" height="66.9"/><rect x="1484" y="368.8" width="1" height="62.2"/><rect x="1485" y="368.5" width="1" height="62.5"/><rect x="1486" y="342.0" width="1" height="89.0"/><rect x="1487" y="369.6" width="1" height="61.4"/><rect x="1488" y="370.0" width="1" height="61.0"/><rect x="1489" y="370.6" width="1" height="60.4"/><rect x="1490" y="366.7" width="1" height="64.3"/><rect x="1491" y="370.3" width="1" height="60.7"/><rect x="1492" y="369.5" width="1" height="61.5"/><rect x="1493" y="368.1" width="1" height="62.9"/><rect x="1494" y="369.5" width="1" height="61.5"/><rect x="1495" y="367.5" width="1" height="63.5"/><rect x="1496" y="373.6" width="1" height="57.4"/><rect x="1497" y="372.3" width="1" height="58.7"/><rect x="1498" y="367.3" width="1" height="63.7"/><rect x="1499" y="367.6" width="1" height="63.4"/><rect x="1500" y="364.5" width="1" height="66.5"/><rect x="1501" y="368.5" width="1" height="62.5"/><rect x="1502" y="369.3" width="1" height="61.7"/><rect x="1503" y="369.1" width="1" height="61.9"/><rect x="1504" y="369.4" width="1" height="61.6"/><rect x="1505" y="369.5" width="1" height="61.5"/><rect x="1506" y="367.6" width="1" height="63.4"/><rect x="1507" y="369.0" width="1" height="62.0"/><rect x="1508" y="369.2" width="1" height="61.8"/><rect x="1509" y="368.4" width="1" height="62.6"/><rect x="1510" y="366.3" width="1" height="64.7"/><rect x="1511" y="366.5" width="1" height="64.5"/><rect x="1512" y="367.3" width="1" height="63.7"/><rect x="1513" y="366.4" width="1" height="64.6"/><rect x="1514" y="368.9" width="1" height="62.1"/><rect x="1515" y="369.5" width="1" height="61.5"/><rect x="1516" y="368.2" width="1" height="62.8"/><rect x="1517" y="369.0" width="1" height="62.0"/><rect x="1518" y="366.7" width="1" height="64.3"/><rect x="1519" y="367.7" width="1" height="63.3"/><rect x="1520" y="369.6" width="1" height="61.4"/><rect x="1521" y="368.8" width="1" height="62.2"/><rect x="1522" y="364.7" width="1" height="66.3"/><rect x="1523" y="368.9" width="1" height="62.1"/><rect x="1524" y="369.3" width="1" height="61.7"/><rect x="1525" y="368.0" width="1" height="63.0"/><rect x="1526" y="369.5" width="1" height="61.5"/><rect x="1527" y="366.3" width="1" height="64.7"/><rect x="1528" y="366.6" width="1" height="64.4"/><rect x="1529" y="367.0" width="1" height="64.0"/><rect x="1530" y="368.9" width="1" height="62.1"/><rect x="1531" y="369.7" width="1" height="61.3"/><rect x="1532" y="369.4" width="1" height="61.6"/><rect x="1533" y="370.2" width="1" height="60.8"/><rect x="1534" y="373.8" width="1" height="57.2"/><rect x="1535" y="367.7" width="1" height="63.3"/><rect x="1536" y="366.7" width="1" height="64.3"/><rect x="1537" y="365.6" width="1" height="65.4"/><rect x="1538" y="368.4" width="1" height="62.6"/><rect x="1539" y="366.6" width="1" height="64.4"/><rect x="1540" y="364.0" width="1" height="67.0"/><rect x="1541" y="363.4" width="1" height="67.6"/><rect x="1542" y="366.6" width="1" height="64.4"/><rect x="1543" y="366.1" width="1" height="64.9"/><rect x="1544" y="366.3" width="1" height="64.7"/><rect x="1545" y="369.8" width="1" height="61.2"/><rect x="1546" y="368.1" width="1" height="62.9"/><rect x="1547" y="368.3" width="1" height="62.7"/><rect x="1548" y="367.2" width="1" height="63.8"/><rect x="1549" y="369.0" width="1" height="62.0"/><rect x="1550" y="367.8" width="1" height="63.2"/><rect x="1551" y="369.0" width="1" height="62.0"/><rect x="1552" y="368.6" width="1" height="62.4"/><rect x="1553" y="369.6" width="1" height="61.4"/><rect x="1554" y="368.8" width="1" height="62.2"/><rect x="1555" y="369.7" width="1" height="61.3"/><rect x="1556" y="369.5" width="1" height="61.5"/><rect x="1557" y="370.2" width="1" height="60.8"/><rect x="1558" y="366.8" width="1" height="64.2"/><rect x="1559" y="366.8" width="1" height="64.2"/><rect x="1560" y="367.0" width="1" height="64.0"/><rect x="1561" y="366.5" width="1" height="64.5"/><rect x="1562" y="369.2" width="1" height="61.8"/><rect x="1563" y="370.1" width="1" height="60.9"/><rect x="1564" y="370.5" width="1" height="60.5"/><rect x="1565" y="369.7" width="1" height="61.3"/><rect x="1566" y="369.2" width="1" height="61.8"/><rect x="1567" y="368.6" width="1" height="62.4"/><rect x="1568" y="367.8" width="1" height="63.2"/><rect x="1569" y="366.7" width="1" height="64.3"/><rect x="1570" y="370.1" width="1" height="60.9"/><rect x="1571" y="369.1" width="1" height="61.9"/><rect x="1572" y="334.0" width="1" height="97.0"/><rect x="1573" y="370.0" width="1" height="61.0"/><rect x="1574" y="368.7" width="1" height="62.3"/><rect x="1575" y="368.7" width="1" height="62.3"/><rect x="1576" y="365.4" width="1" height="65.6"/><rect x="1577" y="365.7" width="1" height="65.3"/><rect x="1578" y="361.3" width="1" height="69.7"/><rect x="1579" y="361.6" width="1" height="69.4"/><rect x="1580" y="368.9" width="1" height="62.1"/><rect x="1581" y="369.8" width="1" height="61.2"/><rect x="1582" y="368.1" width="1" height="62.9"/><rect x="1583" y="368.3" width="1" height="62.7"/><rect x="1584" y="368.3" width="1" height="62.7"/><rect x="1585" y="368.2" width="1" height="62.8"/><rect x="1586" y="368.4" width="1" height="62.6"/><rect x="1587" y="367.3" width="1" height="63.7"/><rect x="1588" y="368.0" width="1" height="63.0"/><rect x="1589" y="366.6" width="1" height="64.4"/><rect x="1590" y="373.9" width="1" height="57.1"/><rect x="1591" y="373.9" width="1" height="57.1"/><rect x="1592" y="366.6" width="1" height="64.4"/><rect x="1593" y="365.8" width="1" height="65.2"/><rect x="1594" y="367.1" width="1" height="63.9"/><rect x="1595" y="369.3" width="1" height="61.7"/><rect x="1596" y="368.0" width="1" height="63.0"/><rect x="1597" y="367.3" width="1" height="63.7"/><rect x="1598" y="366.4" width="1" height="64.6"/><rect x="1599" y="365.8" width="1" height="65.2"/><rect x="1600" y="369.8" width="1" height="61.2"/><rect x="1601" y="369.0" width="1" height="62.0"/><rect x="1602" y="369.6" width="1" height="61.4"/><rect x="1603" y="368.8" width="1" height="62.2"/><rect x="1604" y="368.1" width="1" height="62.9"/><rect x="1605" y="369.3" width="1" height="61.7"/><rect x="1606" y="368.4" width="1" height="62.6"/><rect x="1607" y="368.3" width="1" height="62.7"/><rect x="1608" y="365.3" width="1" height="65.7"/><rect x="1609" y="364.7" width="1" height="66.3"/><rect x="1610" y="364.8" width="1" height="66.2"/><rect x="1611" y="364.7" width="1" height="66.3"/><rect x="1612" y="367.5" width="1" height="63.5"/><rect x="1613" y="366.6" width="1" height="64.4"/><rect x="1614" y="363.6" width="1" height="67.4"/><rect x="1615" y="364.6" width="1" height="66.4"/><rect x="1616" y="363.9" width="1" height="67.1"/><rect x="1617" y="363.7" width="1" height="67.3"/><rect x="1618" y="365.9" width="1" height="65.1"/><rect x="1619" y="364.5" width="1" height="66.5"/><rect x="1620" y="365.4" width="1" height="65.6"/><rect x="1621" y="364.7" width="1" height="66.3"/><rect x="1622" y="364.4" width="1" height="66.6"/><rect x="1623" y="359.2" width="1" height="71.8"/><rect x="1624" y="352.5" width="1" height="78.5"/><rect x="1625" y="348.4" width="1" height="82.6"/><rect x="1626" y="342.1" width="1" height="88.9"/><rect x="1627" y="336.7" width="1" height="94.3"/><rect x="1628" y="335.8" width="1" height="95.2"/><rect x="1629" y="335.0" width="1" height="96.0"/><rect x="1630" y="340.6" width="1" height="90.4"/><rect x="1631" y="339.7" width="1" height="91.3"/><rect x="1632" y="329.2" width="1" height="101.8"/><rect x="1633" y="328.5" width="1" height="102.5"/><rect x="1634" y="335.8" width="1" height="95.2"/><rect x="1635" y="335.3" width="1" height="95.7"/><rect x="1636" y="339.3" width="1" height="91.7"/><rect x="1637" y="340.8" width="1" height="90.2"/><rect x="1638" y="336.9" width="1" height="94.1"/><rect x="1639" y="336.4" width="1" height="94.6"/><rect x="1640" y="336.6" width="1" height="94.4"/><rect x="1641" y="337.4" width="1" height="93.6"/><rect x="1642" y="336.2" width="1" height="94.8"/><rect x="1643" y="336.1" width="1" height="94.9"/><rect x="1644" y="341.8" width="1" height="89.2"/><rect x="1645" y="341.3" width="1" height="89.7"/><rect x="1646" y="337.9" width="1" height="93.1"/><rect x="1647" y="336.9" width="1" height="94.1"/><rect x="1648" y="339.2" width="1" height="91.8"/><rect x="1649" y="340.2" width="1" height="90.8"/><rect x="1650" y="340.8" width="1" height="90.2"/><rect x="1651" y="340.3" width="1" height="90.7"/><rect x="1652" y="340.6" width="1" height="90.4"/><rect x="1653" y="340.2" width="1" height="90.8"/><rect x="1654" y="340.9" width="1" height="90.1"/><rect x="1655" y="341.4" width="1" height="89.6"/><rect x="1656" y="341.2" width="1" height="89.8"/><rect x="1657" y="346.7" width="1" height="84.3"/><rect x="1658" y="345.4" width="1" height="85.6"/><rect x="1659" y="341.5" width="1" height="89.5"/><rect x="1660" y="347.3" width="1" height="83.7"/><rect x="1661" y="346.7" width="1" height="84.3"/><rect x="1662" y="347.2" width="1" height="83.8"/><rect x="1663" y="348.5" width="1" height="82.5"/><rect x="1664" y="343.9" width="1" height="87.1"/><rect x="1665" y="343.6" width="1" height="87.4"/><rect x="1666" y="350.9" width="1" height="80.1"/><rect x="1667" y="346.7" width="1" height="84.3"/><rect x="1668" y="343.0" width="1" height="88.0"/><rect x="1669" y="344.1" width="1" height="86.9"/><rect x="1670" y="345.5" width="1" height="85.5"/><rect x="1671" y="345.7" width="1" height="85.3"/><rect x="1672" y="346.2" width="1" height="84.8"/><rect x="1673" y="345.3" width="1" height="85.7"/><rect x="1674" y="345.6" width="1" height="85.4"/><rect x="1675" y="345.6" width="1" height="85.4"/><rect x="1676" y="349.2" width="1" height="81.8"/><rect x="1677" y="350.8" width="1" height="80.2"/><rect x="1678" y="351.9" width="1" height="79.1"/><rect x="1679" y="351.5" width="1" height="79.5"/><rect x="1680" y="351.1" width="1" height="79.9"/><rect x="1681" y="353.5" width="1" height="77.5"/><rect x="1682" y="353.7" width="1" height="77.3"/><rect x="1683" y="355.9" width="1" height="75.1"/><rect x="1684" y="365.4" width="1" height="65.6"/><rect x="1685" y="368.5" width="1" height="62.5"/><rect x="1686" y="364.4" width="1" height="66.6"/><rect x="1687" y="363.7" width="1" height="67.3"/><rect x="1688" y="364.3" width="1" height="66.7"/><rect x="1689" y="362.6" width="1" height="68.4"/><rect x="1690" y="361.6" width="1" height="69.4"/><rect x="1691" y="362.5" width="1" height="68.5"/><rect x="1692" y="350.0" width="1" height="81.0"/><rect x="1693" y="360.6" width="1" height="70.4"/><rect x="1694" y="360.8" width="1" height="70.2"/><rect x="1695" y="353.0" width="1" height="78.0"/><rect x="1696" y="363.1" width="1" height="67.9"/><rect x="1697" y="363.0" width="1" height="68.0"/><rect x="1698" y="359.5" width="1" height="71.5"/><rect x="1699" y="361.4" width="1" height="69.6"/><rect x="1700" y="365.1" width="1" height="65.9"/><rect x="1701" y="364.1" width="1" height="66.9"/><rect x="1702" y="363.3" width="1" height="67.7"/><rect x="1703" y="363.4" width="1" height="67.6"/><rect x="1704" y="364.0" width="1" height="67.0"/><rect x="1705" y="363.2" width="1" height="67.8"/><rect x="1706" y="364.6" width="1" height="66.4"/><rect x="1707" y="364.8" width="1" height="66.2"/><rect x="1708" y="363.5" width="1" height="67.5"/><rect x="1709" y="365.3" width="1" height="65.7"/><rect x="1710" y="362.1" width="1" height="68.9"/><rect x="1711" y="361.5" width="1" height="69.5"/><rect x="1712" y="364.2" width="1" height="66.8"/><rect x="1713" y="363.9" width="1" height="67.1"/><rect x="1714" y="360.1" width="1" height="70.9"/><rect x="1715" y="364.3" width="1" height="66.7"/><rect x="1716" y="365.8" width="1" height="65.2"/><rect x="1717" y="362.0" width="1" height="69.0"/><rect x="1718" y="362.5" width="1" height="68.5"/><rect x="1719" y="366.5" width="1" height="64.5"/><rect x="1720" y="362.7" width="1" height="68.3"/><rect x="1721" y="363.3" width="1" height="67.7"/><rect x="1722" y="366.5" width="1" height="64.5"/><rect x="1723" y="366.9" width="1" height="64.1"/><rect x="1724" y="364.7" width="1" height="66.3"/><rect x="1725" y="364.4" width="1" height="66.6"/><rect x="1726" y="365.3" width="1" height="65.7"/><rect x="1727" y="366.2" width="1" height="64.8"/><rect x="1728" y="366.5" width="1" height="64.5"/><rect x="1729" y="366.1" width="1" height="64.9"/><rect x="1730" y="362.9" width="1" height="68.1"/><rect x="1731" y="362.6" width="1" height="68.4"/><rect x="1732" y="364.3" width="1" height="66.7"/><rect x="1733" y="363.4" width="1" height="67.6"/><rect x="1734" y="366.9" width="1" height="64.1"/><rect x="1735" y="365.6" width="1" height="65.4"/><rect x="1736" y="364.7" width="1" height="66.3"/><rect x="1737" y="364.6" width="1" height="66.4"/><rect x="1738" y="362.0" width="1" height="69.0"/><rect x="1739" y="365.9" width="1" height="65.1"/><rect x="1740" y="366.2" width="1" height="64.8"/><rect x="1741" y="365.5" width="1" height="65.5"/><rect x="1742" y="366.0" width="1" height="65.0"/><rect x="1743" y="366.0" width="1" height="65.0"/><rect x="1744" y="367.5" width="1" height="63.5"/><rect x="1745" y="362.2" width="1" height="68.8"/><rect x="1746" y="365.4" width="1" height="65.6"/><rect x="1747" y="365.1" width="1" height="65.9"/><rect x="1748" y="367.0" width="1" height="64.0"/><rect x="1749" y="365.9" width="1" height="65.1"/><rect x="1750" y="363.7" width="1" height="67.3"/><rect x="1751" y="363.1" width="1" height="67.9"/><rect x="1752" y="363.4" width="1" height="67.6"/><rect x="1753" y="363.3" width="1" height="67.7"/><rect x="1754" y="362.3" width="1" height="68.7"/><rect x="1755" y="362.2" width="1" height="68.8"/><rect x="1756" y="367.5" width="1" height="63.5"/><rect x="1757" y="366.6" width="1" height="64.4"/><rect x="1758" y="367.4" width="1" height="63.6"/><rect x="1759" y="365.9" width="1" height="65.1"/><rect x="1760" y="365.6" width="1" height="65.4"/><rect x="1761" y="366.4" width="1" height="64.6"/><rect x="1762" y="367.9" width="1" height="63.1"/><rect x="1763" y="367.4" width="1" height="63.6"/><rect x="1764" y="363.8" width="1" height="67.2"/><rect x="1765" y="364.4" width="1" height="66.6"/><rect x="1766" y="363.6" width="1" height="67.4"/><rect x="1767" y="365.1" width="1" height="65.9"/><rect x="1768" y="365.4" width="1" height="65.6"/><rect x="1769" y="365.4" width="1" height="65.6"/><rect x="1770" y="359.5" width="1" height="71.5"/><rect x="1771" y="359.6" width="1" height="71.4"/><rect x="1772" y="366.1" width="1" height="64.9"/><rect x="1773" y="366.6" width="1" height="64.4"/><rect x="1774" y="364.2" width="1" height="66.8"/><rect x="1775" y="365.3" width="1" height="65.7"/><rect x="1776" y="365.9" width="1" height="65.1"/><rect x="1777" y="364.8" width="1" height="66.2"/><rect x="1778" y="360.0" width="1" height="71.0"/><rect x="1779" y="360.5" width="1" height="70.5"/><rect x="1780" y="365.4" width="1" height="65.6"/><rect x="1781" y="363.8" width="1" height="67.2"/><rect x="1782" y="367.2" width="1" height="63.8"/><rect x="1783" y="364.2" width="1" height="66.8"/><rect x="1784" y="366.5" width="1" height="64.5"/><rect x="1785" y="365.0" width="1" height="66.0"/><rect x="1786" y="366.7" width="1" height="64.3"/><rect x="1787" y="366.7" width="1" height="64.3"/><rect x="1788" y="363.2" width="1" height="67.8"/><rect x="1789" y="364.6" width="1" height="66.4"/><rect x="1790" y="366.3" width="1" height="64.7"/><rect x="1791" y="364.3" width="1" height="66.7"/><rect x="1792" y="362.0" width="1" height="69.0"/><rect x="1793" y="360.6" width="1" height="70.4"/><rect x="1794" y="356.0" width="1" height="75.0"/><rect x="1795" y="355.2" width="1" height="75.8"/><rect x="1796" y="347.5" width="1" height="83.5"/><rect x="1797" y="342.1" width="1" height="88.9"/><rect x="1798" y="342.5" width="1" height="88.5"/><rect x="1799" y="340.1" width="1" height="90.9"/><rect x="1800" y="347.5" width="1" height="83.5"/><rect x="1801" y="330.7" width="1" height="100.3"/><rect x="1802" y="331.9" width="1" height="99.1"/><rect x="1803" y="332.8" width="1" height="98.2"/><rect x="1804" y="339.0" width="1" height="92.0"/><rect x="1805" y="338.8" width="1" height="92.2"/><rect x="1806" y="334.7" width="1" height="96.3"/><rect x="1807" y="336.6" width="1" height="94.4"/><rect x="1808" y="336.0" width="1" height="95.0"/><rect x="1809" y="336.1" width="1" height="94.9"/><rect x="1810" y="345.8" width="1" height="85.2"/><rect x="1811" y="346.9" width="1" height="84.1"/><rect x="1812" y="344.9" width="1" height="86.1"/><rect x="1813" y="344.4" width="1" height="86.6"/><rect x="1814" y="344.5" width="1" height="86.5"/><rect x="1815" y="344.5" width="1" height="86.5"/><rect x="1816" y="345.7" width="1" height="85.3"/><rect x="1817" y="346.2" width="1" height="84.8"/><rect x="1818" y="350.6" width="1" height="80.4"/><rect x="1819" y="350.1" width="1" height="80.9"/><rect x="1820" y="352.1" width="1" height="78.9"/><rect x="1821" y="347.1" width="1" height="83.9"/><rect x="1822" y="345.9" width="1" height="85.1"/><rect x="1823" y="345.1" width="1" height="85.9"/><rect x="1824" y="343.2" width="1" height="87.8"/><rect x="1825" y="341.3" width="1" height="89.7"/><rect x="1826" y="340.4" width="1" height="90.6"/><rect x="1827" y="339.8" width="1" height="91.2"/><rect x="1828" y="342.5" width="1" height="88.5"/><rect x="1829" y="342.0" width="1" height="89.0"/><rect x="1830" y="344.9" width="1" height="86.1"/><rect x="1831" y="344.6" width="1" height="86.4"/><rect x="1832" y="336.4" width="1" height="94.6"/><rect x="1833" y="336.8" width="1" height="94.2"/><rect x="1834" y="337.7" width="1" height="93.3"/><rect x="1835" y="337.7" width="1" height="93.3"/><rect x="1836" y="341.0" width="1" height="90.0"/><rect x="1837" y="339.6" width="1" height="91.4"/><rect x="1838" y="333.3" width="1" height="97.7"/><rect x="1839" y="333.5" width="1" height="97.5"/><rect x="1840" y="333.5" width="1" height="97.5"/><rect x="1841" y="331.8" width="1" height="99.2"/><rect x="1842" y="335.1" width="1" height="95.9"/><rect x="1843" y="335.0" width="1" height="96.0"/><rect x="1844" y="330.8" width="1" height="100.2"/><rect x="1845" y="329.7" width="1" height="101.3"/><rect x="1846" y="330.4" width="1" height="100.6"/><rect x="1847" y="331.1" width="1" height="99.9"/><rect x="1848" y="334.4" width="1" height="96.6"/><rect x="1849" y="330.6" width="1" height="100.4"/><rect x="1850" y="330.6" width="1" height="100.4"/><rect x="1851" y="330.1" width="1" height="100.9"/><rect x="1852" y="332.1" width="1" height="98.9"/><rect x="1853" y="332.3" width="1" height="98.7"/><rect x="1854" y="332.8" width="1" height="98.2"/><rect x="1855" y="334.6" width="1" height="96.4"/><rect x="1856" y="333.6" width="1" height="97.4"/><rect x="1857" y="334.6" width="1" height="96.4"/><rect x="1858" y="339.5" width="1" height="91.5"/><rect x="1859" y="343.8" width="1" height="87.2"/><rect x="1860" y="343.4" width="1" height="87.6"/><rect x="1861" y="345.7" width="1" height="85.3"/><rect x="1862" y="350.6" width="1" height="80.4"/><rect x="1863" y="352.0" width="1" height="79.0"/><rect x="1864" y="354.4" width="1" height="76.6"/><rect x="1865" y="352.2" width="1" height="78.8"/><rect x="1866" y="359.9" width="1" height="71.1"/><rect x="1867" y="350.5" width="1" height="80.5"/><rect x="1868" y="354.6" width="1" height="76.4"/><rect x="1869" y="358.5" width="1" height="72.5"/><rect x="1870" y="353.1" width="1" height="77.9"/><rect x="1871" y="353.8" width="1" height="77.2"/><rect x="1872" y="353.5" width="1" height="77.5"/><rect x="1873" y="354.1" width="1" height="76.9"/><rect x="1874" y="356.5" width="1" height="74.5"/><rect x="1875" y="357.1" width="1" height="73.9"/><rect x="1876" y="353.5" width="1" height="77.5"/><rect x="1877" y="353.3" width="1" height="77.7"/><rect x="1878" y="360.2" width="1" height="70.8"/><rect x="1879" y="360.2" width="1" height="70.8"/><rect x="1880" y="356.9" width="1" height="74.1"/><rect x="1881" y="356.7" width="1" height="74.3"/><rect x="1882" y="358.1" width="1" height="72.9"/><rect x="1883" y="358.3" width="1" height="72.7"/><rect x="1884" y="357.1" width="1" height="73.9"/><rect x="1885" y="360.8" width="1" height="70.2"/><rect x="1886" y="358.2" width="1" height="72.8"/><rect x="1887" y="359.1" width="1" height="71.9"/><rect x="1888" y="359.8" width="1" height="71.2"/><rect x="1889" y="359.3" width="1" height="71.7"/><rect x="1890" y="357.9" width="1" height="73.1"/><rect x="1891" y="358.7" width="1" height="72.3"/><rect x="1892" y="360.2" width="1" height="70.8"/><rect x="1893" y="359.6" width="1" height="71.4"/></g><path d="M41.5,431V450M252.2,431V450M463.0,431V450M673.8,431V450M884.5,431V450M1095.2,431V450M1306.0,431V450M1516.8,431V450M1727.5,431V450" stroke="#a0a0b0" stroke-width="1.4"/><path d="M1136.5,431V450" stroke="#e02020" stroke-width="1.4"/><text x="8" y="164.0" font-family="Liberation Sans" font-size="12" fill="#e8e8b0">10</text><text x="8" y="182.0" font-family="Liberation Sans" font-size="12" fill="#e8e8b0">20</text><text x="8" y="200.0" font-family="Liberation Sans" font-size="12" fill="#e8e8b0">30</text><text x="8" y="218.0" font-family="Liberation Sans" font-size="12" fill="#e8e8b0">40</text><text x="8" y="236.0" font-family="Liberation Sans" font-size="12" fill="#e8e8b0">50</text><text x="8" y="254.0" font-family="Liberation Sans" font-size="12" fill="#e8e8b0">60</text><text x="8" y="272.0" font-family="Liberation Sans" font-size="12" fill="#e8e8b0">70</text><text x="8" y="290.0" font-family="Liberation Sans" font-size="12" fill="#e8e8b0">80</text><text x="8" y="308.0" font-family="Liberation Sans" font-size="12" fill="#e8e8b0">90</text><text x="8" y="326.0" font-family="Liberation Sans" font-size="12" fill="#e8e8b0">100</text><text x="8" y="344.0" font-family="Liberation Sans" font-size="12" fill="#e8e8b0">110</text><text x="8" y="362.0" font-family="Liberation Sans" font-size="12" fill="#e8e8b0">120</text><text x="41.5" y="447" text-anchor="middle" font-family="Liberation Sans" font-size="12" fill="#e8e8b8">14.060</text><text x="252.2" y="447" text-anchor="middle" font-family="Liberation Sans" font-size="12" fill="#e8e8b8">14.070</text><text x="463.0" y="447" text-anchor="middle" font-family="Liberation Sans" font-size="12" fill="#e8e8b8">14.080</text><text x="673.8" y="447" text-anchor="middle" font-family="Liberation Sans" font-size="12" fill="#e8e8b8">14.090</text><text x="884.5" y="447" text-anchor="middle" font-family="Liberation Sans" font-size="12" fill="#e8e8b8">14.100</text><text x="1095.2" y="447" text-anchor="middle" font-family="Liberation Sans" font-size="12" fill="#e8e8b8">14.110</text><text x="1306.0" y="447" text-anchor="middle" font-family="Liberation Sans" font-size="12" fill="#e8e8b8">14.120</text><text x="1516.8" y="447" text-anchor="middle" font-family="Liberation Sans" font-size="12" fill="#e8e8b8">14.130</text><text x="1727.5" y="447" text-anchor="middle" font-family="Liberation Sans" font-size="12" fill="#e8e8b8">14.140</text></svg><div class="t" style="left:786px;top:2px;font-size:15px;color:#f4f4f4;letter-spacing:0.3px;-webkit-text-stroke:0.45px #f4f4f4">DnSDR v1.1.16.0</div><div class="t" style="left:919px;top:2px;font-size:15px;color:#f4f4f4;-webkit-text-stroke:0.45px #f4f4f4">--</div><div class="t" style="left:942px;top:2px;font-size:15px;color:#f4f4f4;-webkit-text-stroke:0.45px #f4f4f4">UR4QBP</div><div class="wb" style="left:1792px;width:31px"><i class="wmin"></i></div><div class="wb" style="left:1824px;width:31px"><i class="wmax"></i></div><div class="wb wc" style="left:1856px;width:44px"><svg width="14" height="12" style="position:absolute;left:15px;top:1px"><path d="M2,1L12,10M12,1L2,10" stroke="#fff" stroke-width="3"/></svg></div><div class="t" style="left:15px;top:29px;font-size:11px;font-weight:bold;color:#f4f4f4">Установки</div><div class="t" style="left:89px;top:29px;font-size:11px;font-weight:bold;color:#f4f4f4">Memory</div><div class="t" style="left:151px;top:29px;font-size:11px;font-weight:bold;color:#f4f4f4">Звукозапись</div><div class="t" style="left:236px;top:29px;font-size:11px;font-weight:bold;color:#f4f4f4">Эквалайзер</div><div class="t" style="left:317px;top:29px;font-size:11px;font-weight:bold;color:#f4f4f4">XVTRs</div><div class="t" style="left:368px;top:29px;font-size:11px;font-weight:bold;color:#f4f4f4">CWX</div><div class="t" style="left:411px;top:29px;font-size:11px;font-weight:bold;color:#f4f4f4">UCB</div><div class="t" style="left:451px;top:29px;font-size:11px;font-weight:bold;color:#f4f4f4">Инфо</div><div class="t" style="left:502px;top:29px;font-size:11px;font-weight:bold;color:#f4f4f4">Дист. упр.</div><div class="b bl" style="left:9px;top:63.5px;width:46px;height:22.5px;font-size:12px;line-height:22.0px;letter-spacing:0.4px;text-indent:0.4px">Stop</div><div class="b n" style="left:56px;top:63.5px;width:46px;height:22.5px;font-size:12px;line-height:22.0px;letter-spacing:0.4px;text-indent:0.4px">MON</div><div class="b n" style="left:9px;top:87.5px;width:46px;height:22.5px;font-size:12px;line-height:22.0px;letter-spacing:0.4px;text-indent:0.4px">MOX</div><div class="b n" style="left:56px;top:87.5px;width:46px;height:22.5px;font-size:12px;line-height:22.0px;letter-spacing:0.4px;text-indent:0.4px">TUN</div><div class="b n" style="left:9px;top:111px;width:46px;height:22.5px;font-size:12px;line-height:22.0px;letter-spacing:0.4px;text-indent:0.4px">MUT</div><div class="b n" style="left:56px;top:111px;width:46px;height:22.5px;font-size:12px;line-height:22.0px;letter-spacing:0.4px;text-indent:0.4px">X2TR</div><div style="position:absolute;left:113px;top:94px;width:45px;height:1px;background:#b0b0b0"></div><div class="t" style="left:181px;top:65px;font-size:25px"><span style="color:#f0f060;font-size:25px;letter-spacing:2.2px;-webkit-text-stroke:0.5px #f0f060">14.112</span></div><div class="t" style="left:271px;top:68px;"><span style="color:#f05a3a;font-size:23px;letter-spacing:1.2px;-webkit-text-stroke:0.4px #f05a3a">000</span></div><div style="position:absolute;left:269px;top:74px;width:1px;height:13px;background:#909090"></div><div class="t" style="left:187px;top:120px;font-size:13px;color:#48e048;-webkit-text-stroke:0.3px #48e048">20M CW</div><div class="t" style="left:671px;top:65px;"><span style="color:#a0a050;font-size:25px;letter-spacing:1.8px;-webkit-text-stroke:0.4px #a0a050">7.000</span></div><div class="t" style="left:747px;top:68px;"><span style="color:#a0a040;font-size:23px;letter-spacing:1.2px;-webkit-text-stroke:0.4px #a0a040">000</span></div><div style="position:absolute;left:744px;top:74px;width:1px;height:13px;background:#707060"></div><div class="t" style="left:642px;top:119px;font-size:13px;color:#4fa04f;letter-spacing:0.85px">40M Extra CW</div><div class="b n" style="left:333px;top:63.7px;width:46px;height:22.5px;font-size:12px;line-height:22.0px;letter-spacing:0.4px;text-indent:0.4px">RIT</div><div class="sp" style="left:380px;top:63px;width:71px;height:20px"><span>0</span><i style="height:16px"><b class="up"></b><b class="dn"></b></i></div><div class="b n" style="left:452px;top:63.7px;width:23px;height:22.5px;font-size:12px;line-height:22.0px;letter-spacing:0.4px;text-indent:0.4px">0</div><div class="b n" style="left:476px;top:63.7px;width:46px;height:22.5px;font-size:12px;line-height:22.0px;letter-spacing:0.0px;text-indent:0.0px">0 Beat</div><div class="b n" style="left:523px;top:63.7px;width:46px;height:22.5px;font-size:12px;line-height:22.0px;letter-spacing:0.4px;text-indent:0.4px">A &lt; B</div><div class="b n" style="left:333px;top:87.7px;width:46px;height:22.5px;font-size:12px;line-height:22.0px;letter-spacing:0.4px;text-indent:0.4px">XIT</div><div class="sp" style="left:380px;top:87px;width:71px;height:20px"><span>0</span><i style="height:16px"><b class="up"></b><b class="dn"></b></i></div><div class="b n" style="left:452px;top:87.7px;width:23px;height:22.5px;font-size:12px;line-height:22.0px;letter-spacing:0.4px;text-indent:0.4px">0</div><div class="b n" style="left:476px;top:87.7px;width:46px;height:22.5px;font-size:12px;line-height:22.0px;letter-spacing:0.4px;text-indent:0.4px">IF-&gt;V</div><div class="b n" style="left:523px;top:87.7px;width:46px;height:22.5px;font-size:11px;line-height:22.0px;letter-spacing:0.0px;text-indent:0.0px">A &lt;&gt; B</div><div class="t" style="left:343px;top:116px;font-size:12px;font-weight:bold;color:#f0f0f0">Шаг:</div><div class="inp" style="left:380px;top:111px;width:47px;height:19px">50Hz</div><div class="b n" style="left:428px;top:111px;width:23px;height:22.5px;font-size:12px;line-height:22.0px;letter-spacing:0.4px;text-indent:0.4px">−</div><div class="b n" style="left:452px;top:111px;width:23px;height:22.5px;font-size:12px;line-height:22.0px;letter-spacing:0.4px;text-indent:0.4px">+</div><div class="b n" style="left:476px;top:111px;width:46px;height:22.5px;font-size:12px;line-height:22.0px;letter-spacing:0.4px;text-indent:0.4px">SPLT</div><div class="b n" style="left:523px;top:111px;width:46px;height:22.5px;font-size:12px;line-height:22.0px;letter-spacing:0.4px;text-indent:0.4px">A &gt; B</div><div class="t" style="left:1476px;top:48px;font-size:12px;color:#b82828">New Meter 2</div><div class="t" style="left:1690px;top:48px;font-size:12px;color:#b82828">New Meter 1</div><div class="t" style="left:1830px;top:119px;font-size:13px;font-weight:bold;color:#f0f070;letter-spacing:0.5px">-71 dBm</div><svg width="200" height="70" style="position:absolute;left:1690px;top:60px"><rect x="6" y="55" width="96" height="2" fill="#f4f4f4"/><rect x="103" y="55" width="89" height="2" fill="#e02020"/><rect x="25" y="49" width="2" height="7" fill="#f4f4f4"/><rect x="44" y="49" width="2" height="7" fill="#f4f4f4"/><rect x="62" y="49" width="2" height="7" fill="#f4f4f4"/><rect x="81" y="49" width="2" height="7" fill="#f4f4f4"/><rect x="100" y="49" width="2" height="7" fill="#f4f4f4"/><rect x="15" y="52" width="1" height="4" fill="#f4f4f4"/><rect x="34" y="52" width="1" height="4" fill="#f4f4f4"/><rect x="53" y="52" width="1" height="4" fill="#f4f4f4"/><rect x="71" y="52" width="1" height="4" fill="#f4f4f4"/><rect x="90" y="52" width="1" height="4" fill="#f4f4f4"/><rect x="131" y="49" width="2" height="7" fill="#e02020"/><rect x="161" y="49" width="2" height="7" fill="#e02020"/><rect x="190" y="49" width="2" height="7" fill="#e02020"/><rect x="116" y="52" width="1" height="4" fill="#e02020"/><rect x="146" y="52" width="1" height="4" fill="#e02020"/><rect x="176" y="52" width="1" height="4" fill="#e02020"/><text x="26" y="47" text-anchor="middle" font-family="Liberation Sans" font-size="9" fill="#f4f4f4">1</text><text x="45" y="47" text-anchor="middle" font-family="Liberation Sans" font-size="9" fill="#f4f4f4">3</text><text x="63" y="47" text-anchor="middle" font-family="Liberation Sans" font-size="9" fill="#f4f4f4">5</text><text x="82" y="47" text-anchor="middle" font-family="Liberation Sans" font-size="9" fill="#f4f4f4">7</text><text x="101" y="47" text-anchor="middle" font-family="Liberation Sans" font-size="9" fill="#f4f4f4">9</text><text x="132" y="47" text-anchor="middle" font-family="Liberation Sans" font-size="9" fill="#d03030">+20</text><text x="162" y="47" text-anchor="middle" font-family="Liberation Sans" font-size="9" fill="#d03030">+40</text><text x="189" y="47" text-anchor="middle" font-family="Liberation Sans" font-size="9" fill="#d03030">+60</text><rect x="102" y="3" width="2" height="55" fill="#e8e840"/></svg><div class="b n" style="left:9px;top:459px;width:46px;height:22.5px;font-size:12px;line-height:22.0px;letter-spacing:0.4px;text-indent:0.4px">MIN</div><div class="b tl" style="left:56px;top:459px;width:46px;height:22.5px;font-size:12px;line-height:22.0px;letter-spacing:0.4px;text-indent:0.4px">CTR</div><div class="b n" style="left:104px;top:459px;width:46px;height:22.5px;font-size:12px;line-height:22.0px;letter-spacing:0.4px;text-indent:0.4px">LOG</div><div class="b n" style="left:167px;top:459px;width:46px;height:22.5px;font-size:12px;line-height:22.0px;letter-spacing:0.4px;text-indent:0.4px">NR</div><div class="b n" style="left:214px;top:459px;width:46px;height:22.5px;font-size:12px;line-height:22.0px;letter-spacing:0.4px;text-indent:0.4px">ANF</div><div class="b n" style="left:262px;top:459px;width:46px;height:22.5px;font-size:12px;line-height:22.0px;letter-spacing:0.4px;text-indent:0.4px">NB</div><div class="b n" style="left:309px;top:459px;width:46px;height:22.5px;font-size:12px;line-height:22.0px;letter-spacing:0.4px;text-indent:0.4px">NB2</div><div class="b tl" style="left:357px;top:459px;width:46px;height:22.5px;font-size:12px;line-height:22.0px;letter-spacing:0.4px;text-indent:0.4px">SR</div><div class="b n" style="left:404px;top:459px;width:46px;height:22.5px;font-size:12px;line-height:22.0px;letter-spacing:0.4px;text-indent:0.4px">BCI</div><div class="b n" style="left:452px;top:459px;width:46px;height:22.5px;font-size:12px;line-height:22.0px;letter-spacing:0.4px;text-indent:0.4px">BIN</div><div class="b n" style="left:500px;top:459px;width:46px;height:22.5px;font-size:12px;line-height:22.0px;letter-spacing:0.4px;text-indent:0.4px">SQL</div><div class="sp" style="left:546px;top:459px;width:47px;height:20px"><span>96</span><i style="height:16px"><b class="up"></b><b class="dn"></b></i></div><div class="b n" style="left:1650px;top:459px;width:46px;height:22.5px;font-size:12px;line-height:22.0px;letter-spacing:0.4px;text-indent:0.4px">MRX</div><div class="b tl" style="left:1697px;top:459px;width:46px;height:22.5px;font-size:12px;line-height:22.0px;letter-spacing:0.4px;text-indent:0.4px">VFOA</div><div class="b n" style="left:1745px;top:459px;width:46px;height:22.5px;font-size:12px;line-height:22.0px;letter-spacing:0.4px;text-indent:0.4px">VFOB</div><div class="b n" style="left:1792px;top:459px;width:46px;height:22.5px;font-size:12px;line-height:22.0px;letter-spacing:0.4px;text-indent:0.4px">RIT</div><div class="b n" style="left:1840px;top:459px;width:46px;height:22.5px;font-size:12px;line-height:22.0px;letter-spacing:0.4px;text-indent:0.4px">XIT</div><div class="dd" style="left:8px;top:498px;width:142px;height:21px;line-height:19px"><span>Panadapter</span><i></i></div><div class="b n" style="left:167px;top:498px;width:46px;height:22.5px;font-size:12px;line-height:22.0px;letter-spacing:0.4px;text-indent:0.4px">STX</div><div class="b tl" style="left:214px;top:498px;width:46px;height:22.5px;font-size:12px;line-height:22.0px;letter-spacing:0.4px;text-indent:0.4px">AVG</div><div class="b n" style="left:262px;top:498px;width:46px;height:22.5px;font-size:12px;line-height:22.0px;letter-spacing:0.4px;text-indent:0.4px">Peak</div><div class="dd" style="left:325px;top:499px;width:70px;height:20px;line-height:18px"><span>Signal</span><i></i></div><div class="dd" style="left:396px;top:499px;width:70px;height:20px;line-height:18px"><span>Fwd Pwr</span><i></i></div><div class="b n" style="left:484px;top:498px;width:46px;height:22.5px;font-size:12px;line-height:22.0px;letter-spacing:0.4px;text-indent:0.4px">Center</div><div class="t" style="left:536px;top:503px;font-size:11px;font-weight:bold;color:#f0f0f0">Смещение:</div><div class="trk" style="left:609px;top:508px;width:1095px"></div><div class="thumb" style="left:1347px;top:500px"></div><div class="t" style="left:1717px;top:503px;font-size:11px;font-weight:bold;color:#f0f0f0">Масштаб:</div><div class="trk" style="left:1783px;top:508px;width:95px"></div><div class="thumb" style="left:1783px;top:500px"></div><div class="b n" style="left:9px;top:538px;width:46px;height:22.5px;font-size:12px;line-height:22.0px;letter-spacing:0.4px;text-indent:0.4px">160</div><div class="b n" style="left:56px;top:538px;width:46px;height:22.5px;font-size:12px;line-height:22.0px;letter-spacing:0.4px;text-indent:0.4px">80</div><div class="b n" style="left:104px;top:538px;width:46px;height:22.5px;font-size:12px;line-height:22.0px;letter-spacing:0.4px;text-indent:0.4px">60</div><div class="b n" style="left:9px;top:562px;width:46px;height:22.5px;font-size:12px;line-height:22.0px;letter-spacing:0.4px;text-indent:0.4px">40</div><div class="b n" style="left:56px;top:562px;width:46px;height:22.5px;font-size:12px;line-height:22.0px;letter-spacing:0.4px;text-indent:0.4px">30</div><div class="b tl" style="left:104px;top:562px;width:46px;height:22.5px;font-size:12px;line-height:22.0px;letter-spacing:0.4px;text-indent:0.4px">20</div><div class="b n" style="left:9px;top:585.7px;width:46px;height:22.5px;font-size:12px;line-height:22.0px;letter-spacing:0.4px;text-indent:0.4px">17</div><div class="b n" style="left:56px;top:585.7px;width:46px;height:22.5px;font-size:12px;line-height:22.0px;letter-spacing:0.4px;text-indent:0.4px">15</div><div class="b n" style="left:104px;top:585.7px;width:46px;height:22.5px;font-size:12px;line-height:22.0px;letter-spacing:0.4px;text-indent:0.4px">12</div><div class="b n" style="left:9px;top:609.4px;width:46px;height:22.5px;font-size:12px;line-height:22.0px;letter-spacing:0.4px;text-indent:0.4px">10</div><div class="b n" style="left:56px;top:609.4px;width:46px;height:22.5px;font-size:12px;line-height:22.0px;letter-spacing:0.4px;text-indent:0.4px">6</div><div class="b n" style="left:104px;top:609.4px;width:46px;height:22.5px;font-size:12px;line-height:22.0px;letter-spacing:0.4px;text-indent:0.4px"><span style="color:#404040">2</span></div><div class="b n" style="left:9px;top:633px;width:46px;height:22.5px;font-size:12px;line-height:22.0px;letter-spacing:0.4px;text-indent:0.4px">GEN</div><div class="b n" style="left:56px;top:633px;width:46px;height:22.5px;font-size:12px;line-height:22.0px;letter-spacing:0.4px;text-indent:0.4px">WWV</div><div class="b n" style="left:104px;top:633px;width:46px;height:22.5px;font-size:12px;line-height:22.0px;letter-spacing:0.4px;text-indent:0.4px">VHF+</div><div class="b tl" style="left:167px;top:538px;width:46px;height:22.5px;font-size:12px;line-height:22.0px;letter-spacing:0.4px;text-indent:0.4px">USB</div><div class="b n" style="left:215px;top:538px;width:46px;height:22.5px;font-size:12px;line-height:22.0px;letter-spacing:0.4px;text-indent:0.4px">CWU</div><div class="b n" style="left:262px;top:538px;width:46px;height:22.5px;font-size:12px;line-height:22.0px;letter-spacing:0.4px;text-indent:0.4px">DIGU</div><div class="b n" style="left:167px;top:562px;width:46px;height:22.5px;font-size:12px;line-height:22.0px;letter-spacing:0.4px;text-indent:0.4px">LSB</div><div class="b n" style="left:215px;top:562px;width:46px;height:22.5px;font-size:12px;line-height:22.0px;letter-spacing:0.4px;text-indent:0.4px">CWL</div><div class="b n" style="left:262px;top:562px;width:46px;height:22.5px;font-size:12px;line-height:22.0px;letter-spacing:0.4px;text-indent:0.4px">DIGL</div><div class="b n" style="left:167px;top:585.7px;width:46px;height:22.5px;font-size:12px;line-height:22.0px;letter-spacing:0.4px;text-indent:0.4px">AM</div><div class="b n" style="left:215px;top:585.7px;width:46px;height:22.5px;font-size:12px;line-height:22.0px;letter-spacing:0.4px;text-indent:0.4px">FMN</div><div class="b n" style="left:262px;top:585.7px;width:46px;height:22.5px;font-size:12px;line-height:22.0px;letter-spacing:0.4px;text-indent:0.4px">DRM</div><div class="b n" style="left:167px;top:609.4px;width:46px;height:22.5px;font-size:12px;line-height:22.0px;letter-spacing:0.4px;text-indent:0.4px">SAM</div><div class="b n" style="left:215px;top:609.4px;width:46px;height:22.5px;font-size:12px;line-height:22.0px;letter-spacing:0.4px;text-indent:0.4px">DSB</div><div class="b n" style="left:262px;top:609.4px;width:46px;height:22.5px;font-size:12px;line-height:22.0px;letter-spacing:0.4px;text-indent:0.4px">SPEC</div><div class="b n" style="left:167px;top:633px;width:46px;height:22.5px;font-size:12px;line-height:22.0px;letter-spacing:0.4px;text-indent:0.4px"></div><div class="b n" style="left:215px;top:633px;width:46px;height:22.5px;font-size:12px;line-height:22.0px;letter-spacing:0.4px;text-indent:0.4px"></div><div class="b n" style="left:262px;top:633px;width:46px;height:22.5px;font-size:12px;line-height:22.0px;letter-spacing:0.4px;text-indent:0.4px"></div><div class="b n" style="left:326px;top:538px;width:46px;height:22.5px;font-size:12px;line-height:22.0px;letter-spacing:0.4px;text-indent:0.4px">5.0k</div><div class="b n" style="left:373px;top:538px;width:46px;height:22.5px;font-size:12px;line-height:22.0px;letter-spacing:0.4px;text-indent:0.4px">4.4k</div><div class="b n" style="left:421px;top:538px;width:46px;height:22.5px;font-size:12px;line-height:22.0px;letter-spacing:0.4px;text-indent:0.4px">3.8k</div><div class="b n" style="left:326px;top:562px;width:46px;height:22.5px;font-size:12px;line-height:22.0px;letter-spacing:0.4px;text-indent:0.4px">3.3k</div><div class="b n" style="left:373px;top:562px;width:46px;height:22.5px;font-size:12px;line-height:22.0px;letter-spacing:0.4px;text-indent:0.4px">2.9k</div><div class="b tl" style="left:421px;top:562px;width:46px;height:22.5px;font-size:12px;line-height:22.0px;letter-spacing:0.4px;text-indent:0.4px">2.7k</div><div class="b n" style="left:326px;top:585.7px;width:46px;height:22.5px;font-size:12px;line-height:22.0px;letter-spacing:0.4px;text-indent:0.4px">2.4k</div><div class="b n" style="left:373px;top:585.7px;width:46px;height:22.5px;font-size:12px;line-height:22.0px;letter-spacing:0.4px;text-indent:0.4px">2.1k</div><div class="b n" style="left:421px;top:585.7px;width:46px;height:22.5px;font-size:12px;line-height:22.0px;letter-spacing:0.4px;text-indent:0.4px">1.8k</div><div class="b n" style="left:326px;top:609.4px;width:46px;height:22.5px;font-size:12px;line-height:22.0px;letter-spacing:0.4px;text-indent:0.4px">1.0k</div><div class="b n" style="left:373px;top:609.4px;width:46px;height:22.5px;font-size:12px;line-height:22.0px;letter-spacing:0.4px;text-indent:0.4px">1.0k</div><div class="b n" style="left:421px;top:609.4px;width:46px;height:22.5px;font-size:12px;line-height:22.0px;letter-spacing:0.4px;text-indent:0.4px">1.0k</div><div class="b n" style="left:326px;top:633px;width:46px;height:22.5px;font-size:12px;line-height:22.0px;letter-spacing:0.4px;text-indent:0.4px">Var 1</div><div class="b n" style="left:373px;top:633px;width:46px;height:22.5px;font-size:12px;line-height:22.0px;letter-spacing:0.4px;text-indent:0.4px">Var 2</div><div class="b n" style="left:421px;top:633px;width:46px;height:22.5px;font-size:12px;line-height:22.0px;letter-spacing:0.4px;text-indent:0.4px">Reset</div><div class="t" style="left:503px;top:534px;font-size:12px;font-weight:bold;color:#f0f0f0">АРУ (Тип)</div><div class="t" style="left:625px;top:534px;font-size:11px;font-weight:bold;color:#f0f0f0">Предусиление</div><div class="dd" style="left:483px;top:554px;width:94px;height:20px;line-height:18px"><span>Med</span><i></i></div><div class="dd" style="left:618px;top:554px;width:94px;height:20px;line-height:18px"><span>High</span><i></i></div><div class="t" style="left:485px;top:590px;font-size:12px;font-weight:bold;color:#f0f0f0">AF:</div><div class="trk" style="left:539px;top:595px;width:118px"></div><div class="thumb" style="left:568px;top:587px"></div><div class="sp" style="left:665px;top:586px;width:47px;height:19px"><span>28</span><i style="height:15px"><b class="up"></b><b class="dn"></b></i></div><div class="t" style="left:485px;top:614px;font-size:12px;font-weight:bold;color:#f0f0f0">AGC-T:</div><div class="trk" style="left:539px;top:619px;width:118px"></div><div class="thumb" style="left:584px;top:611px"></div><div class="sp" style="left:665px;top:610px;width:47px;height:19px"><span>40</span><i style="height:15px"><b class="up"></b><b class="dn"></b></i></div><div class="t" style="left:485px;top:638px;font-size:12px;font-weight:bold;color:#f0f0f0">Drive:</div><div class="trk" style="left:539px;top:643px;width:118px"></div><div class="thumb" style="left:593px;top:635px"></div><div class="sp" style="left:665px;top:634px;width:47px;height:19px"><span>50</span><i style="height:15px"><b class="up"></b><b class="dn"></b></i></div><div class="vtrk" style="left:740px;top:544px;height:44px"></div><div class="vtrk" style="left:867px;top:544px;height:44px"></div><div class="vth" style="left:738px;top:543px"></div><div class="vth" style="left:865px;top:543px"></div><div class="trk" style="left:765px;top:542px;width:85px"></div><div class="sth" style="left:805px;top:540px"></div><div style="position:absolute;left:767px;top:551px;width:1px;height:3px;background:#707070"></div><div style="position:absolute;left:787px;top:551px;width:1px;height:3px;background:#707070"></div><div style="position:absolute;left:808px;top:551px;width:1px;height:3px;background:#707070"></div><div style="position:absolute;left:828px;top:551px;width:1px;height:3px;background:#707070"></div><div style="position:absolute;left:847px;top:551px;width:1px;height:3px;background:#707070"></div><div class="trk" style="left:765px;top:581px;width:85px"></div><div class="sth" style="left:805px;top:579px"></div><div style="position:absolute;left:767px;top:590px;width:1px;height:3px;background:#707070"></div><div style="position:absolute;left:787px;top:590px;width:1px;height:3px;background:#707070"></div><div style="position:absolute;left:808px;top:590px;width:1px;height:3px;background:#707070"></div><div style="position:absolute;left:828px;top:590px;width:1px;height:3px;background:#707070"></div><div style="position:absolute;left:847px;top:590px;width:1px;height:3px;background:#707070"></div><div class="t" style="left:911px;top:535px;font-size:11px;letter-spacing:0.2px;font-weight:bold;color:#f0f0f0">Transmit Profile:</div><div class="dd" style="left:903px;top:554px;width:102px;height:20px;line-height:18px"><span>Default</span><i></i></div><div style="position:absolute;left:887px;top:579px;width:11px;height:11px;background:#dde4f0;border:1px solid #c8d0e0;box-sizing:border-box"></div><div class="t" style="left:902px;top:578px;font-size:11px;font-weight:bold;color:#f0f0f0">Swap</div><div class="b n" style="left:729px;top:610px;width:46px;height:22.5px;font-size:12px;line-height:22.0px;letter-spacing:0.4px;text-indent:0.4px">GATE</div><div class="sp" style="left:776px;top:609px;width:47px;height:20px"><span>-40</span><i style="height:16px"><b class="up"></b><b class="dn"></b></i></div><div class="b n" style="left:825px;top:610px;width:46px;height:22.5px;font-size:12px;line-height:22.0px;letter-spacing:0.4px;text-indent:0.4px">VOX</div><div class="sp" style="left:871px;top:609px;width:47px;height:20px"><span>200</span><i style="height:16px"><b class="up"></b><b class="dn"></b></i></div><div class="b tl" style="left:729px;top:633.5px;width:46px;height:22.5px;font-size:12px;line-height:22.0px;letter-spacing:0.4px;text-indent:0.4px">DX</div><div class="sp" style="left:776px;top:633px;width:47px;height:20px"><span>3</span><i style="height:16px"><b class="up"></b><b class="dn"></b></i></div><div class="b n" style="left:825px;top:633.5px;width:46px;height:22.5px;font-size:12px;line-height:22.0px;letter-spacing:0.4px;text-indent:0.4px">CPDR</div><div class="sp" style="left:871px;top:633px;width:47px;height:20px"><span>1</span><i style="height:16px"><b class="up"></b><b class="dn"></b></i></div><div class="b n" style="left:919px;top:633.5px;width:46px;height:22.5px;font-size:12px;line-height:22.0px;letter-spacing:0.4px;text-indent:0.4px">VAC</div><div class="t" style="left:4px;top:676px;font-size:11px;color:#e8e8e8;letter-spacing:-0.1px">Max peak: &nbsp;14.065 426 MHz &nbsp;-87.3dBm &nbsp;-46574.1Hz &nbsp;Cursor:</div><div class="t" style="left:1736px;top:676px;font-size:11px;color:#e8e8e8;letter-spacing:-0.3px">RAM: 1548Mb</div><div class="t" style="left:1818px;top:676px;font-size:11px;color:#e8e8e8;letter-spacing:-0.2px">CPU %: 9.4</div></body></html>
